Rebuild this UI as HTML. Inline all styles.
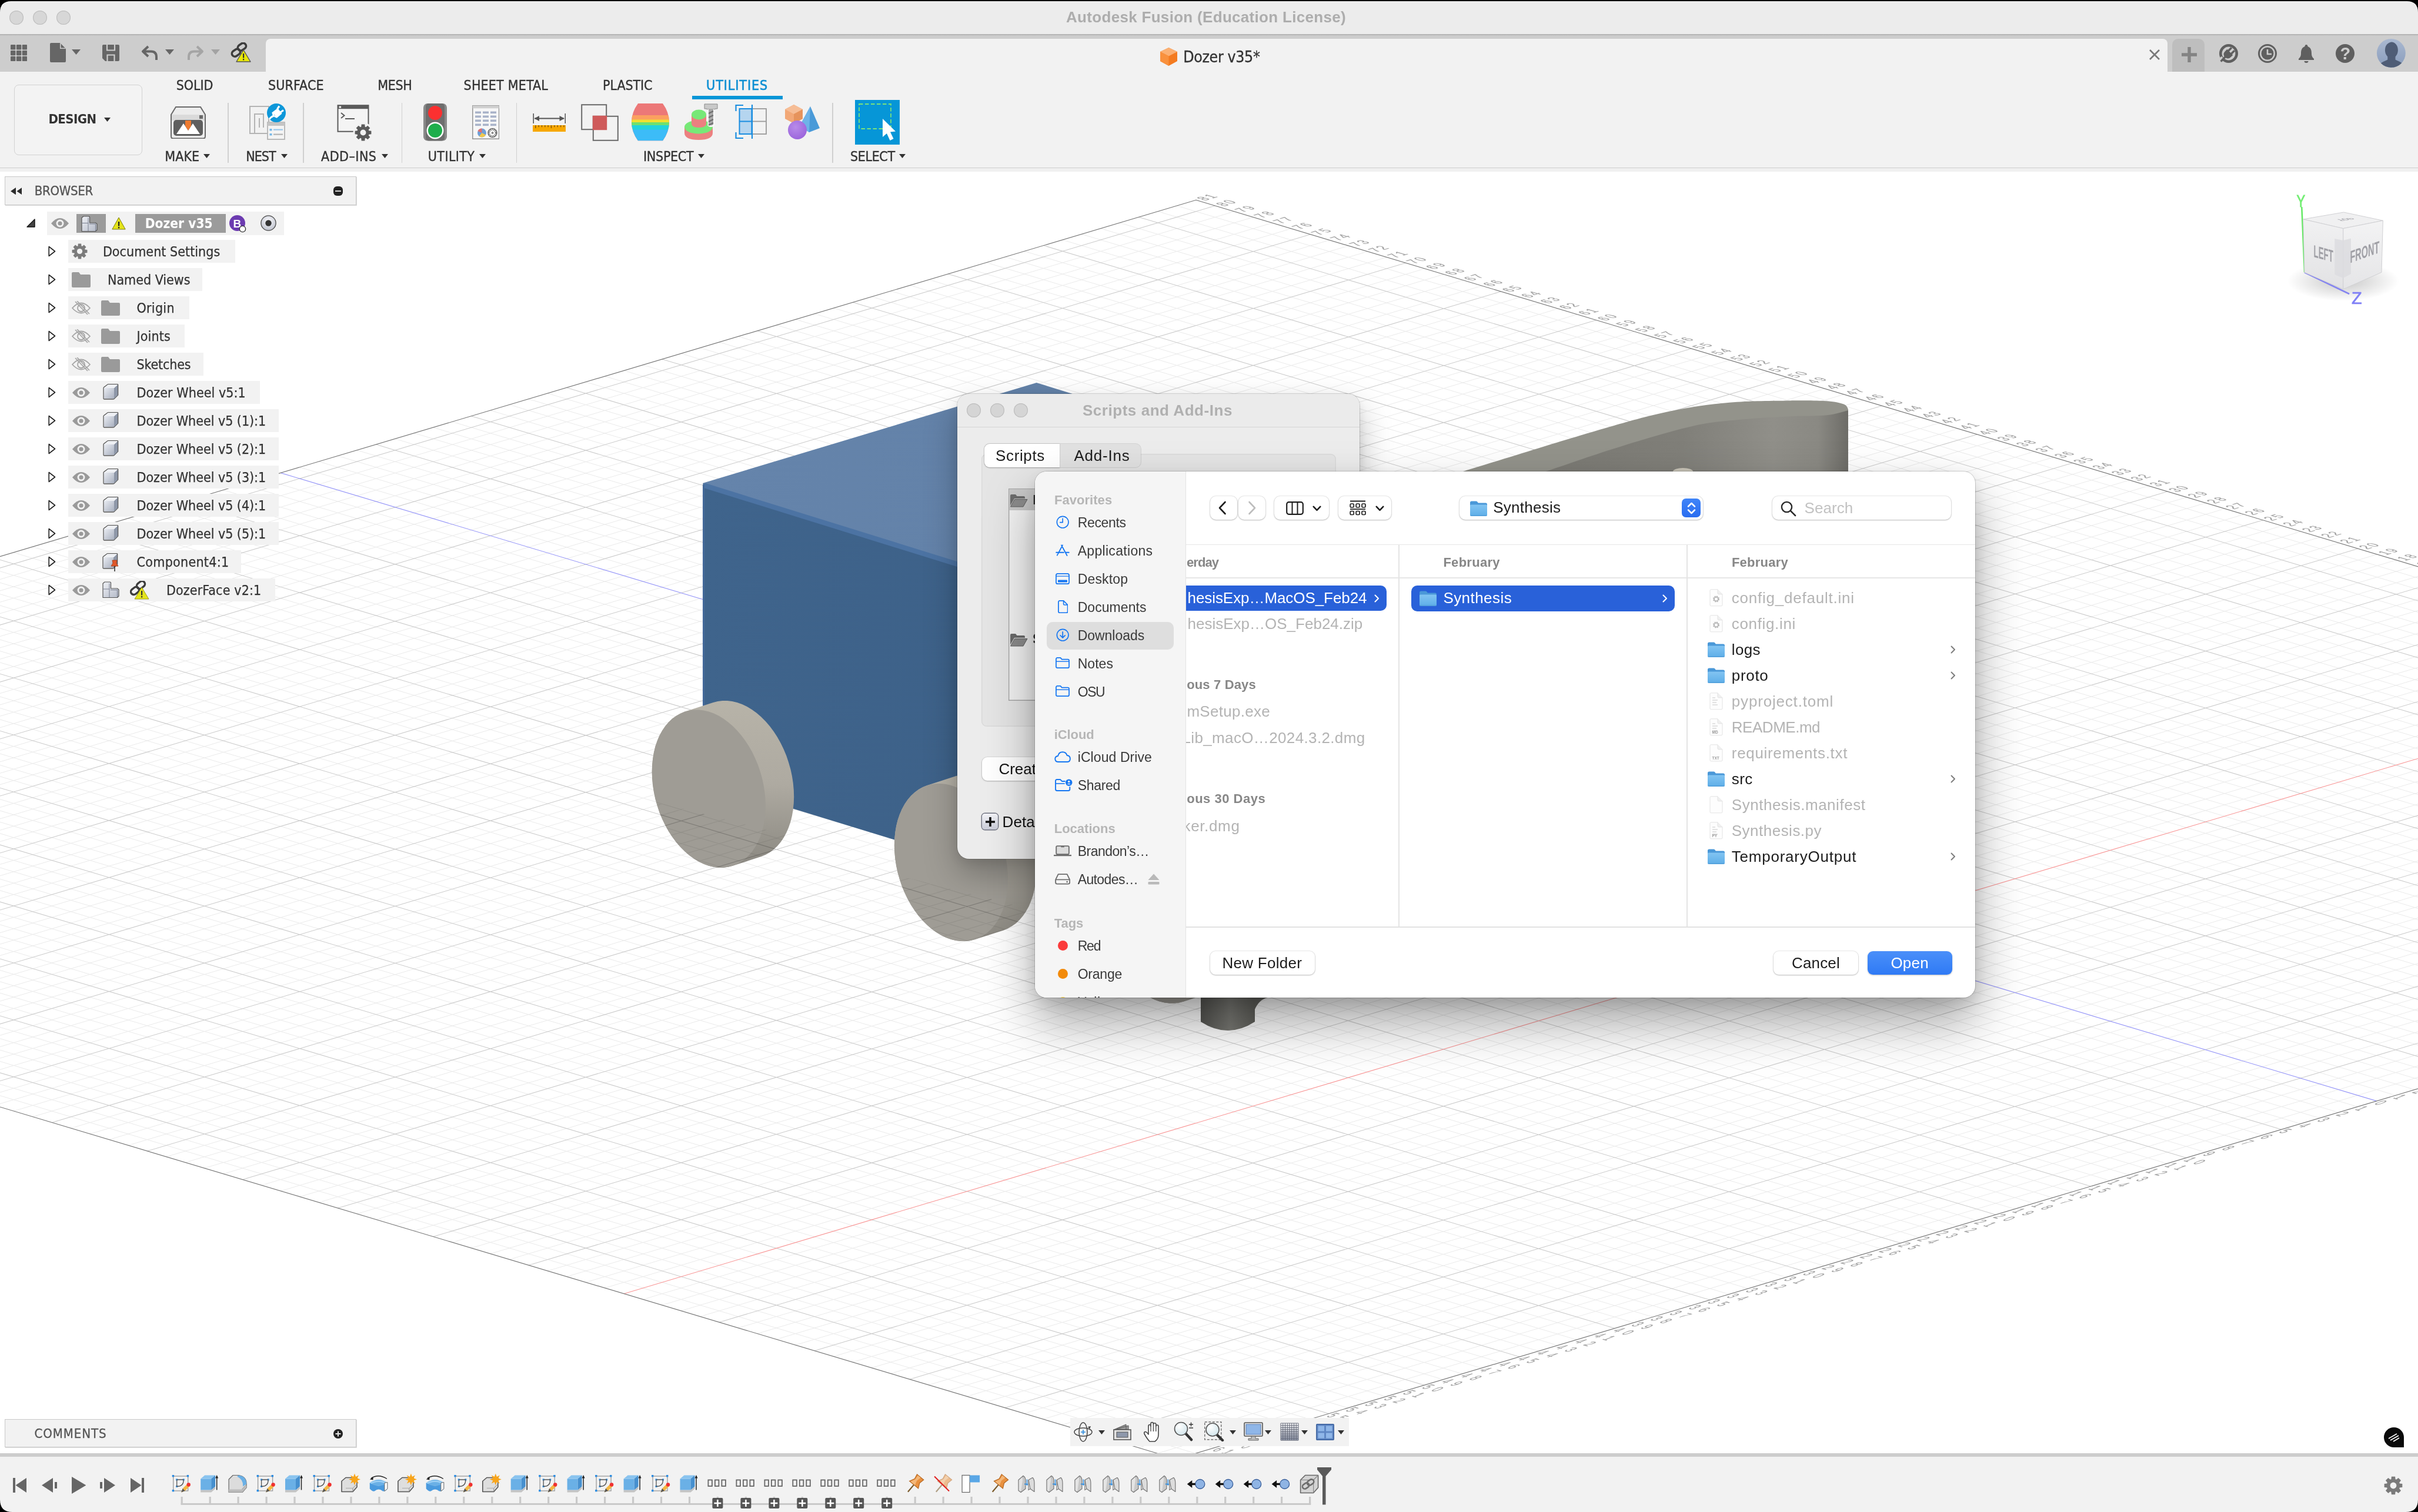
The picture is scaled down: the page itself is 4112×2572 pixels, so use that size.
<!DOCTYPE html>
<html><head><meta charset="utf-8"><title>Autodesk Fusion</title>
<style>
html,body{margin:0;padding:0}
body{width:4112px;height:2572px;overflow:hidden;background:#fff;position:relative;font-kerning:none;-webkit-font-smoothing:antialiased}
.abs{position:absolute;display:block}
.t{position:absolute;white-space:nowrap;font-kerning:none}
</style></head><body><div id="root" style="position:absolute;left:0;top:0;width:4112px;height:2572px;will-change:transform">
<svg class="abs" style="left:0;top:0" width="4112" height="2572" viewBox="0 0 4112 2572">
<defs>
<linearGradient id="gTop" x1="0" y1="0" x2="1" y2="0"><stop offset="0" stop-color="#6584ab"/><stop offset="0.7" stop-color="#6180a6"/><stop offset="1" stop-color="#5a799f"/></linearGradient>
<linearGradient id="gLeft" x1="0" y1="0" x2="1" y2="0"><stop offset="0" stop-color="#3f648c"/><stop offset="1" stop-color="#3c5f86"/></linearGradient>
<linearGradient id="gRim" x1="0" y1="0" x2="0" y2="1"><stop offset="0" stop-color="#b7b3a8"/><stop offset="0.5" stop-color="#aeaaa1"/><stop offset="0.8" stop-color="#98958d"/><stop offset="1" stop-color="#8b8881"/></linearGradient>
<linearGradient id="gFace" gradientUnits="userSpaceOnUse" x1="2630" y1="0" x2="3143" y2="0"><stop offset="0" stop-color="#7b7a74"/><stop offset="0.45" stop-color="#807f79"/><stop offset="0.75" stop-color="#908f89"/><stop offset="0.9" stop-color="#8a8983"/><stop offset="1" stop-color="#6d6c67"/></linearGradient>
<linearGradient id="gCyl" gradientUnits="userSpaceOnUse" x1="2042" y1="0" x2="2134" y2="0"><stop offset="0" stop-color="#565652"/><stop offset="0.55" stop-color="#7a7a75"/><stop offset="1" stop-color="#60605b"/></linearGradient>
<radialGradient id="gShadow"><stop offset="0" stop-color="#000" stop-opacity="0.22"/><stop offset="1" stop-color="#000" stop-opacity="0"/></radialGradient>
</defs>
<defs><path id="gmin" d="M5563.4 1418.7L2001.4 350.0M5531.1 1428.4L1969.0 359.6M5466.3 1447.7L1904.2 379.0M5433.9 1457.4L1871.7 388.6M5401.6 1467.0L1839.3 398.3M5369.2 1476.7L1806.9 408.0M5304.4 1496.0L1742.0 427.3M5272.1 1505.7L1709.6 437.0M5239.7 1515.4L1677.2 446.6M5207.3 1525.0L1644.8 456.3M5142.6 1544.3L1579.9 475.7M5110.2 1554.0L1547.5 485.3M5077.8 1563.7L1515.1 495.0M5045.4 1573.3L1482.6 504.7M4980.7 1592.7L1417.8 524.0M4948.3 1602.3L1385.3 533.7M4915.9 1612.0L1352.9 543.3M4883.5 1621.6L1320.5 553.0M4818.8 1641.0L1255.6 572.3M4786.4 1650.6L1223.2 582.0M4754.0 1660.3L1190.8 591.7M4721.7 1670.0L1158.3 601.4M4656.9 1689.3L1093.5 620.7M4624.5 1699.0L1061.0 630.4M4592.1 1708.6L1028.6 640.0M4559.7 1718.3L996.2 649.7M4495.0 1737.6L931.3 669.1M4462.6 1747.3L898.9 678.7M4430.2 1756.9L866.4 688.4M4397.8 1766.6L834.0 698.1M4333.1 1785.9L769.1 717.4M4300.7 1795.6L736.7 727.1M4268.3 1805.3L704.3 736.7M4235.9 1814.9L671.8 746.4M4171.2 1834.3L607.0 765.8M4138.8 1843.9L574.5 775.4M4106.4 1853.6L542.1 785.1M4074.0 1863.3L509.7 794.8M4009.2 1882.6L444.8 814.1M3976.8 1892.3L412.4 823.8M3944.5 1901.9L379.9 833.5M3912.1 1911.6L347.5 843.1M3847.3 1930.9L282.6 862.5M3814.9 1940.6L250.2 872.2M3782.5 1950.3L217.7 881.8M3750.1 1959.9L185.3 891.5M3685.3 1979.3L120.4 910.8M3653.0 1988.9L88.0 920.5M3620.6 1998.6L55.5 930.2M3588.2 2008.3L23.1 939.9M3523.4 2027.6L-41.8 959.2M3491.0 2037.3L-74.2 968.9M3458.6 2046.9L-106.7 978.6M3426.2 2056.6L-139.1 988.2M3361.4 2075.9L-204.0 1007.6M3329.1 2085.6L-236.5 1017.2M3296.7 2095.3L-268.9 1026.9M3264.3 2104.9L-301.3 1036.6M3199.5 2124.3L-366.2 1055.9M3167.1 2133.9L-398.7 1065.6M3134.7 2143.6L-431.1 1075.3M3102.3 2153.3L-463.6 1085.0M3037.5 2172.6L-528.5 1104.3M3005.1 2182.3L-560.9 1114.0M2972.7 2191.9L-593.3 1123.7M2940.3 2201.6L-625.8 1133.3M2875.5 2221.0L-690.7 1152.7M2843.1 2230.6L-723.1 1162.4M2810.7 2240.3L-755.6 1172.0M2778.3 2250.0L-788.0 1181.7M2713.6 2269.3L-852.9 1201.1M2681.2 2279.0L-885.4 1210.7M2648.8 2288.6L-917.8 1220.4M2616.4 2298.3L-950.3 1230.1M2551.6 2317.6L-1015.2 1249.4M2519.2 2327.3L-1047.6 1259.1M2486.8 2337.0L-1080.1 1268.8M2454.4 2346.7L-1112.5 1278.5M2389.6 2366.0L-1177.4 1297.8M2357.2 2375.7L-1209.9 1307.5M2324.8 2385.3L-1242.3 1317.2M2292.4 2395.0L-1274.8 1326.8M2227.6 2414.3L-1339.7 1346.2M2195.2 2424.0L-1372.1 1355.9M2162.8 2433.7L-1404.6 1365.6M2130.4 2443.4L-1437.0 1375.2M2065.6 2462.7L-1501.9 1394.6M2033.1 2472.4L-1534.4 1404.3M5563.5 1399.4L1968.3 2472.3M5531.1 1389.7L1935.9 2462.6M5498.8 1379.9L1903.6 2452.9M5434.1 1360.5L1838.8 2433.5M5401.7 1350.8L1806.3 2423.8M5369.4 1341.1L1773.9 2414.1M5337.0 1331.4L1741.5 2404.4M5272.3 1312.0L1676.7 2385.0M5240.0 1302.3L1644.3 2375.3M5207.6 1292.6L1611.9 2365.6M5175.3 1282.9L1579.5 2355.9M5110.5 1263.5L1514.7 2336.5M5078.2 1253.8L1482.3 2326.8M5045.8 1244.0L1449.9 2317.1M5013.5 1234.3L1417.5 2307.4M4948.8 1214.9L1352.7 2288.0M4916.4 1205.2L1320.3 2278.3M4884.0 1195.5L1287.8 2268.6M4851.7 1185.8L1255.4 2258.9M4787.0 1166.4L1190.6 2239.5M4754.6 1156.7L1158.2 2229.8M4722.2 1146.9L1125.8 2220.1M4689.9 1137.2L1093.4 2210.4M4625.1 1117.8L1028.5 2191.0M4592.8 1108.1L996.1 2181.3M4560.4 1098.4L963.7 2171.6M4528.0 1088.7L931.3 2161.9M4463.3 1069.3L866.4 2142.4M4430.9 1059.5L834.0 2132.7M4398.6 1049.8L801.6 2123.0M4366.2 1040.1L769.2 2113.3M4301.5 1020.7L704.3 2093.9M4269.1 1011.0L671.9 2084.2M4236.7 1001.3L639.5 2074.5M4204.3 991.6L607.1 2064.8M4139.6 972.1L542.2 2045.4M4107.2 962.4L509.8 2035.7M4074.8 952.7L477.4 2026.0M4042.5 943.0L444.9 2016.2M3977.7 923.6L380.1 1996.8M3945.3 913.8L347.6 1987.1M3913.0 904.1L315.2 1977.4M3880.6 894.4L282.8 1967.7M3815.8 875.0L217.9 1948.3M3783.4 865.3L185.5 1938.6M3751.0 855.5L153.1 1928.9M3718.7 845.8L120.6 1919.2M3653.9 826.4L55.7 1899.7M3621.5 816.7L23.3 1890.0M3589.1 807.0L-9.1 1880.3M3556.7 797.2L-41.6 1870.6M3492.0 777.8L-106.4 1851.2M3459.6 768.1L-138.9 1841.5M3427.2 758.4L-171.3 1831.7M3394.8 748.7L-203.8 1822.0M3330.0 729.2L-268.6 1802.6M3297.6 719.5L-301.1 1792.9M3265.2 709.8L-333.5 1783.2M3232.8 700.1L-366.0 1773.5M3168.1 680.6L-430.9 1754.0M3135.7 670.9L-463.3 1744.3M3103.3 661.2L-495.8 1734.6M3070.9 651.5L-528.2 1724.9M3006.1 632.0L-593.1 1705.5M2973.7 622.3L-625.5 1695.8M2941.3 612.6L-658.0 1686.0M2908.9 602.8L-690.4 1676.3M2844.1 583.4L-755.4 1656.9M2811.7 573.7L-787.8 1647.2M2779.3 564.0L-820.3 1637.5M2746.9 554.2L-852.7 1627.7M2682.1 534.8L-917.6 1608.3M2649.7 525.1L-950.1 1598.6M2617.3 515.3L-982.5 1588.9M2584.9 505.6L-1015.0 1579.2M2520.0 486.2L-1079.9 1559.7M2487.6 476.5L-1112.4 1550.0M2455.2 466.7L-1144.8 1540.3M2422.8 457.0L-1177.3 1530.6M2358.0 437.6L-1242.2 1511.1M2325.6 427.8L-1274.7 1501.4M2293.2 418.1L-1307.1 1491.7M2260.8 408.4L-1339.6 1482.0M2195.9 388.9L-1404.5 1462.5M2163.5 379.2L-1437.0 1452.8M2131.1 369.5L-1469.5 1443.1M2098.7 359.8L-1501.9 1433.4"/><path id="gmaj" d="M5498.7 1438.1L1936.6 369.3M5336.8 1486.4L1774.5 417.6M5174.9 1534.7L1612.3 466.0M5013.1 1583.0L1450.2 514.3M4851.2 1631.3L1288.1 562.7M4689.3 1679.6L1125.9 611.0M4527.4 1728.0L963.7 659.4M4365.5 1776.3L801.6 707.7M4203.5 1824.6L639.4 756.1M3879.7 1921.3L315.0 852.8M3717.7 1969.6L152.8 901.2M3555.8 2017.9L-9.4 949.5M3393.8 2066.3L-171.6 997.9M3231.9 2114.6L-333.8 1046.3M3069.9 2162.9L-496.0 1094.6M2907.9 2211.3L-658.2 1143.0M2746.0 2259.6L-820.5 1191.4M2584.0 2308.0L-982.7 1239.8M2422.0 2356.3L-1145.0 1288.1M2260.0 2404.7L-1307.2 1336.5M2098.0 2453.0L-1469.5 1384.9M5466.4 1370.2L1871.2 2443.2M5304.7 1321.7L1709.1 2394.7M5142.9 1273.2L1547.1 2346.2M4981.1 1224.6L1385.1 2297.7M4819.3 1176.1L1223.0 2249.2M4495.7 1079.0L898.9 2152.2M4333.8 1030.4L736.8 2103.6M4172.0 981.8L574.6 2055.1M4010.1 933.3L412.5 2006.5M3848.2 884.7L250.4 1958.0M3686.3 836.1L88.2 1909.4M3524.4 787.5L-74.0 1860.9M3362.4 738.9L-236.2 1812.3M3200.5 690.3L-398.4 1763.8M3038.5 641.7L-560.6 1715.2M2876.5 593.1L-722.9 1666.6M2714.5 544.5L-885.2 1618.0M2552.5 495.9L-1047.4 1569.4M2390.4 447.3L-1209.7 1520.9M2228.4 398.7L-1372.1 1472.3M2066.3 350.0L-1534.4 1423.7"/></defs>
<use href="#gmin" stroke="#eaeaea" stroke-width="1" fill="none"/>
<use href="#gmaj" stroke="#cbcbcb" stroke-width="1.05" fill="none"/>
<path d="M4041.6 1872.9L477.2 804.4" stroke="#9595f8" stroke-width="1.1"/>
<path d="M4657.5 1127.5L1061.0 2200.7" stroke="#f89595" stroke-width="1.1"/>
<path d="M2033.9 340.3 L5595.8 1409.1 L2000.7 2482.0 L-1566.9 1413.9 Z" stroke="#747474" stroke-width="1.15" fill="none"/>
<g font-family="Liberation Sans,sans-serif" font-size="1" fill="#a2a2a2">
<g letter-spacing="0.14" stroke="#a2a2a2" stroke-width="0.012">
<text transform="matrix(17.8 -5.5 23.4 6.6 2049.3 341.5)">81</text>
<text transform="matrix(17.8 -5.5 23.4 6.6 2081.7 351.2)">80</text>
<text transform="matrix(17.8 -5.5 23.4 6.6 2114.1 361.0)">79</text>
<text transform="matrix(17.8 -5.5 23.4 6.6 2146.5 370.7)">78</text>
<text transform="matrix(17.8 -5.5 23.4 6.6 2178.9 380.4)">77</text>
<text transform="matrix(17.8 -5.5 23.4 6.6 2211.3 390.1)">76</text>
<text transform="matrix(17.8 -5.5 23.4 6.6 2243.8 399.9)">75</text>
<text transform="matrix(17.8 -5.5 23.4 6.6 2276.2 409.6)">74</text>
<text transform="matrix(17.8 -5.5 23.4 6.6 2308.6 419.3)">73</text>
<text transform="matrix(17.8 -5.5 23.4 6.6 2341.0 429.0)">72</text>
<text transform="matrix(17.8 -5.5 23.4 6.6 2373.4 438.8)">71</text>
<text transform="matrix(17.8 -5.5 23.4 6.6 2405.8 448.5)">70</text>
<text transform="matrix(17.8 -5.5 23.4 6.6 2438.2 458.2)">69</text>
<text transform="matrix(17.8 -5.5 23.4 6.6 2470.6 467.9)">68</text>
<text transform="matrix(17.8 -5.5 23.4 6.6 2503.0 477.7)">67</text>
<text transform="matrix(17.8 -5.5 23.4 6.6 2535.4 487.4)">66</text>
<text transform="matrix(17.8 -5.5 23.4 6.6 2567.9 497.1)">65</text>
<text transform="matrix(17.8 -5.5 23.4 6.6 2600.3 506.8)">64</text>
<text transform="matrix(17.8 -5.5 23.4 6.6 2632.7 516.5)">63</text>
<text transform="matrix(17.8 -5.5 23.4 6.6 2665.1 526.3)">62</text>
<text transform="matrix(17.8 -5.5 23.4 6.6 2697.5 536.0)">61</text>
<text transform="matrix(17.8 -5.5 23.4 6.6 2729.9 545.7)">60</text>
<text transform="matrix(17.8 -5.5 23.4 6.6 2762.3 555.4)">59</text>
<text transform="matrix(17.8 -5.5 23.4 6.6 2794.7 565.2)">58</text>
<text transform="matrix(17.8 -5.5 23.4 6.6 2827.1 574.9)">57</text>
<text transform="matrix(17.8 -5.5 23.4 6.6 2859.5 584.6)">56</text>
<text transform="matrix(17.8 -5.5 23.4 6.6 2891.9 594.3)">55</text>
<text transform="matrix(17.8 -5.5 23.4 6.6 2924.3 604.0)">54</text>
<text transform="matrix(17.8 -5.5 23.4 6.6 2956.7 613.8)">53</text>
<text transform="matrix(17.8 -5.5 23.4 6.6 2989.1 623.5)">52</text>
<text transform="matrix(17.8 -5.5 23.4 6.6 3021.5 633.2)">51</text>
<text transform="matrix(17.8 -5.5 23.4 6.6 3053.9 642.9)">50</text>
<text transform="matrix(17.8 -5.5 23.4 6.6 3086.3 652.7)">49</text>
<text transform="matrix(17.8 -5.5 23.4 6.6 3118.7 662.4)">48</text>
<text transform="matrix(17.8 -5.5 23.4 6.6 3151.1 672.1)">47</text>
<text transform="matrix(17.8 -5.5 23.4 6.6 3183.5 681.8)">46</text>
<text transform="matrix(17.8 -5.5 23.4 6.6 3215.9 691.5)">45</text>
<text transform="matrix(17.8 -5.5 23.4 6.6 3248.2 701.3)">44</text>
<text transform="matrix(17.8 -5.5 23.4 6.6 3280.6 711.0)">43</text>
<text transform="matrix(17.8 -5.5 23.4 6.6 3313.0 720.7)">42</text>
<text transform="matrix(17.8 -5.5 23.4 6.6 3345.4 730.4)">41</text>
<text transform="matrix(17.8 -5.5 23.4 6.6 3377.8 740.1)">40</text>
<text transform="matrix(17.8 -5.5 23.4 6.6 3410.2 749.9)">39</text>
<text transform="matrix(17.8 -5.5 23.4 6.6 3442.6 759.6)">38</text>
<text transform="matrix(17.8 -5.5 23.4 6.6 3475.0 769.3)">37</text>
<text transform="matrix(17.8 -5.5 23.4 6.6 3507.4 779.0)">36</text>
<text transform="matrix(17.8 -5.5 23.4 6.6 3539.8 788.7)">35</text>
<text transform="matrix(17.8 -5.5 23.4 6.6 3572.1 798.4)">34</text>
<text transform="matrix(17.8 -5.5 23.4 6.6 3604.5 808.2)">33</text>
<text transform="matrix(17.8 -5.5 23.4 6.6 3636.9 817.9)">32</text>
<text transform="matrix(17.8 -5.5 23.4 6.6 3669.3 827.6)">31</text>
<text transform="matrix(17.8 -5.5 23.4 6.6 3701.7 837.3)">30</text>
<text transform="matrix(17.8 -5.5 23.4 6.6 3734.1 847.0)">29</text>
<text transform="matrix(17.8 -5.5 23.4 6.6 3766.4 856.7)">28</text>
<text transform="matrix(17.8 -5.5 23.4 6.6 3798.8 866.5)">27</text>
<text transform="matrix(17.8 -5.5 23.4 6.6 3831.2 876.2)">26</text>
<text transform="matrix(17.8 -5.5 23.4 6.6 3863.6 885.9)">25</text>
<text transform="matrix(17.8 -5.5 23.4 6.6 3896.0 895.6)">24</text>
<text transform="matrix(17.8 -5.5 23.4 6.6 3928.4 905.3)">23</text>
<text transform="matrix(17.8 -5.5 23.4 6.6 3960.7 915.0)">22</text>
<text transform="matrix(17.8 -5.5 23.4 6.6 3993.1 924.8)">21</text>
<text transform="matrix(17.8 -5.5 23.4 6.6 4025.5 934.5)">20</text>
<text transform="matrix(17.8 -5.5 23.4 6.6 4057.9 944.2)">19</text>
<text transform="matrix(17.8 -5.5 23.4 6.6 4090.2 953.9)">18</text>
<text transform="matrix(17.8 -5.5 23.4 6.6 4122.6 963.6)">17</text>
<text transform="matrix(17.8 -5.5 23.4 6.6 4155.0 973.3)">16</text>
</g><g letter-spacing="0.49" stroke="#a2a2a2" stroke-width="0.012">
<text transform="matrix(15 4.05 -24.4 9.4 4036.0 1877.7)">0</text>
<text transform="matrix(15 4.05 -24.4 9.4 4003.6 1887.4)">1</text>
<text transform="matrix(15 4.05 -24.4 9.4 3971.2 1897.1)">2</text>
<text transform="matrix(15 4.05 -24.4 9.4 3938.9 1906.7)">3</text>
<text transform="matrix(15 4.05 -24.4 9.4 3906.5 1916.4)">4</text>
<text transform="matrix(15 4.05 -24.4 9.4 3874.1 1926.1)">5</text>
<text transform="matrix(15 4.05 -24.4 9.4 3841.7 1935.7)">6</text>
<text transform="matrix(15 4.05 -24.4 9.4 3809.3 1945.4)">7</text>
<text transform="matrix(15 4.05 -24.4 9.4 3776.9 1955.1)">8</text>
<text transform="matrix(15 4.05 -24.4 9.4 3744.5 1964.7)">9</text>
<text transform="matrix(15 4.05 -24.4 9.4 3712.1 1974.4)">10</text>
<text transform="matrix(15 4.05 -24.4 9.4 3679.7 1984.1)">11</text>
<text transform="matrix(15 4.05 -24.4 9.4 3647.4 1993.7)">12</text>
<text transform="matrix(15 4.05 -24.4 9.4 3615.0 2003.4)">13</text>
<text transform="matrix(15 4.05 -24.4 9.4 3582.6 2013.1)">14</text>
<text transform="matrix(15 4.05 -24.4 9.4 3550.2 2022.7)">15</text>
<text transform="matrix(15 4.05 -24.4 9.4 3517.8 2032.4)">16</text>
<text transform="matrix(15 4.05 -24.4 9.4 3485.4 2042.1)">17</text>
<text transform="matrix(15 4.05 -24.4 9.4 3453.0 2051.7)">18</text>
<text transform="matrix(15 4.05 -24.4 9.4 3420.6 2061.4)">19</text>
<text transform="matrix(15 4.05 -24.4 9.4 3388.2 2071.1)">20</text>
<text transform="matrix(15 4.05 -24.4 9.4 3355.8 2080.7)">21</text>
<text transform="matrix(15 4.05 -24.4 9.4 3323.5 2090.4)">22</text>
<text transform="matrix(15 4.05 -24.4 9.4 3291.1 2100.1)">23</text>
<text transform="matrix(15 4.05 -24.4 9.4 3258.7 2109.7)">24</text>
<text transform="matrix(15 4.05 -24.4 9.4 3226.3 2119.4)">25</text>
<text transform="matrix(15 4.05 -24.4 9.4 3193.9 2129.1)">26</text>
<text transform="matrix(15 4.05 -24.4 9.4 3161.5 2138.7)">27</text>
<text transform="matrix(15 4.05 -24.4 9.4 3129.1 2148.4)">28</text>
<text transform="matrix(15 4.05 -24.4 9.4 3096.7 2158.1)">29</text>
<text transform="matrix(15 4.05 -24.4 9.4 3064.3 2167.7)">30</text>
<text transform="matrix(15 4.05 -24.4 9.4 3031.9 2177.4)">31</text>
<text transform="matrix(15 4.05 -24.4 9.4 2999.5 2187.1)">32</text>
<text transform="matrix(15 4.05 -24.4 9.4 2967.1 2196.7)">33</text>
<text transform="matrix(15 4.05 -24.4 9.4 2934.7 2206.4)">34</text>
<text transform="matrix(15 4.05 -24.4 9.4 2902.3 2216.1)">35</text>
<text transform="matrix(15 4.05 -24.4 9.4 2869.9 2225.8)">36</text>
<text transform="matrix(15 4.05 -24.4 9.4 2837.5 2235.4)">37</text>
<text transform="matrix(15 4.05 -24.4 9.4 2805.1 2245.1)">38</text>
<text transform="matrix(15 4.05 -24.4 9.4 2772.7 2254.8)">39</text>
<text transform="matrix(15 4.05 -24.4 9.4 2740.4 2264.4)">40</text>
<text transform="matrix(15 4.05 -24.4 9.4 2708.0 2274.1)">41</text>
<text transform="matrix(15 4.05 -24.4 9.4 2675.6 2283.8)">42</text>
<text transform="matrix(15 4.05 -24.4 9.4 2643.2 2293.4)">43</text>
<text transform="matrix(15 4.05 -24.4 9.4 2610.8 2303.1)">44</text>
<text transform="matrix(15 4.05 -24.4 9.4 2578.4 2312.8)">45</text>
<text transform="matrix(15 4.05 -24.4 9.4 2546.0 2322.4)">46</text>
<text transform="matrix(15 4.05 -24.4 9.4 2513.6 2332.1)">47</text>
<text transform="matrix(15 4.05 -24.4 9.4 2481.2 2341.8)">48</text>
<text transform="matrix(15 4.05 -24.4 9.4 2448.8 2351.5)">49</text>
<text transform="matrix(15 4.05 -24.4 9.4 2416.4 2361.1)">50</text>
<text transform="matrix(15 4.05 -24.4 9.4 2384.0 2370.8)">51</text>
<text transform="matrix(15 4.05 -24.4 9.4 2351.6 2380.5)">52</text>
<text transform="matrix(15 4.05 -24.4 9.4 2319.2 2390.1)">53</text>
<text transform="matrix(15 4.05 -24.4 9.4 2286.8 2399.8)">54</text>
<text transform="matrix(15 4.05 -24.4 9.4 2254.4 2409.5)">55</text>
<text transform="matrix(15 4.05 -24.4 9.4 2222.0 2419.1)">56</text>
<text transform="matrix(15 4.05 -24.4 9.4 2189.6 2428.8)">57</text>
<text transform="matrix(15 4.05 -24.4 9.4 2157.2 2438.5)">58</text>
<text transform="matrix(15 4.05 -24.4 9.4 2124.8 2448.2)">59</text>
<text transform="matrix(15 4.05 -24.4 9.4 2092.4 2457.8)">60</text>
<text transform="matrix(15 4.05 -24.4 9.4 2060.0 2467.5)">61</text>
<text transform="matrix(15 4.05 -24.4 9.4 2027.5 2477.2)">62</text>
<text transform="matrix(15 4.05 -24.4 9.4 1995.1 2486.8)">63</text>
<text transform="matrix(15 4.05 -24.4 9.4 4068.4 1868.1)">1</text>
<text transform="matrix(15 4.05 -24.4 9.4 4100.8 1858.4)">2</text>
<text transform="matrix(15 4.05 -24.4 9.4 4133.2 1848.7)">3</text>
</g></g>
<path d="M2490.2 801.3C2527.4 789.9 2655.7 750.0 2713.6 733.1C2771.5 716.2 2799.7 708.1 2837.6 700.0C2875.5 691.9 2906.5 687.8 2941.0 684.7C2975.5 681.6 3016.8 681.8 3044.4 681.4C3072.0 681.0 3091.3 681.2 3106.5 682.2C3121.7 683.2 3129.3 685.3 3135.4 687.6C3141.5 689.9 3141.7 694.4 3142.9 695.8 L3142.9 1000 L1900 1000 Z" fill="#93938b"/>
<path d="M2630.9 801.3C2651.6 794.4 2713.6 772.6 2754.9 759.9C2796.2 747.1 2844.5 732.5 2879.0 724.8C2913.5 717.1 2934.1 716.4 2961.7 713.6C2989.3 710.8 3020.3 709.4 3044.4 708.2C3068.5 707.0 3090.1 707.9 3106.5 706.2C3122.9 704.5 3136.8 699.3 3142.9 697.9 L3142.9 1000 L2000 1000 Z" fill="url(#gFace)"/>
<ellipse cx="2862" cy="802" rx="17" ry="6" fill="#c9c5b8"/>
<path d="M2042 1600 L2042 1738 Q2088 1768 2134 1738 L2134 1600Z" fill="url(#gCyl)"/>
<path d="M2133 1690L2156 1690L2156 1697Q2141 1700 2133.5 1718Z" fill="#62625d"/>
<path d="M1195.5 821.8L1762.7 650.9L2662.7 930.8L2095.5 1101.7Z" fill="url(#gTop)"/>
<path d="M1195.5 821.8L2095.5 1101.7L2095.5 1604.6L1195.5 1328.6Z" fill="url(#gLeft)"/>
<path d="M1199.5 826.4L2095.5 1105.1" stroke="#4c73a3" stroke-width="8.5" fill="none" stroke-linecap="round"/>
<path d="M1196.5 824.8L1196.5 1328.6" stroke="#44699a" stroke-width="3" fill="none"/>
<path d="M1875.4 1543.5 L1875.8 1532.2 L1876.9 1521.2 L1878.7 1510.6 L1881.2 1500.4 L1884.5 1490.8 L1888.3 1481.9 L1892.9 1473.6 L1898.0 1466.0 L1903.7 1459.3 L1909.9 1453.4 L1916.6 1448.5 L1923.7 1444.5 L1931.2 1441.4 L1979.5 1425.7 L1987.3 1423.7 L1995.3 1422.7 L2003.5 1422.7 L2011.9 1423.7 L2020.3 1425.7 L2028.7 1428.7 L2037.1 1432.7 L2045.3 1437.7 L2053.3 1443.5 L2061.1 1450.2 L2068.6 1457.8 L2075.7 1466.0 L2082.4 1475.0 L2088.6 1484.6 L2094.3 1494.7 L2099.4 1505.3 L2104.0 1516.3 L2107.8 1527.7 L2111.1 1539.2 L2113.6 1550.9 L2115.4 1562.6 L2116.5 1574.2 L2116.9 1585.8 L2116.5 1597.1 L2115.4 1608.1 L2113.6 1618.7 L2111.1 1628.9 L2107.8 1638.5 L2104.0 1647.4 L2099.4 1655.7 L2094.3 1663.3 L2088.6 1670.0 L2082.4 1675.9 L2075.7 1680.8 L2068.6 1684.8 L2061.1 1687.9 L2012.8 1703.6 L2005.0 1705.6 L1997.0 1706.6 L1988.8 1706.6 L1980.4 1705.6 L1972.0 1703.6 L1963.6 1700.6 L1955.2 1696.6 L1947.0 1691.6 L1939.0 1685.8 L1931.2 1679.1 L1923.7 1671.5 L1916.6 1663.3 L1909.9 1654.3 L1903.7 1644.7 L1898.0 1634.6 L1892.9 1624.0 L1888.3 1613.0 L1884.5 1601.6 L1881.2 1590.1 L1878.7 1578.4 L1876.9 1566.7 L1875.8 1555.1 Z" fill="url(#gRim)"/><path d="M2068.6 1601.5 L2068.2 1612.8 L2067.1 1623.8 L2065.3 1634.4 L2062.8 1644.6 L2059.5 1654.2 L2055.7 1663.1 L2051.1 1671.4 L2046.0 1679.0 L2040.3 1685.7 L2034.1 1691.6 L2027.4 1696.5 L2020.3 1700.5 L2012.8 1703.6 L2005.0 1705.6 L1997.0 1706.6 L1988.8 1706.6 L1980.4 1705.6 L1972.0 1703.6 L1963.6 1700.6 L1955.2 1696.6 L1947.0 1691.6 L1939.0 1685.8 L1931.2 1679.1 L1923.7 1671.5 L1916.6 1663.3 L1909.9 1654.3 L1903.7 1644.7 L1898.0 1634.6 L1892.9 1624.0 L1888.3 1613.0 L1884.5 1601.6 L1881.2 1590.1 L1878.7 1578.4 L1876.9 1566.7 L1875.8 1555.1 L1875.4 1543.5 L1875.8 1532.2 L1876.9 1521.2 L1878.7 1510.6 L1881.2 1500.4 L1884.5 1490.8 L1888.3 1481.9 L1892.9 1473.6 L1898.0 1466.0 L1903.7 1459.3 L1909.9 1453.4 L1916.6 1448.5 L1923.7 1444.5 L1931.2 1441.4 L1939.0 1439.4 L1947.0 1438.4 L1955.2 1438.4 L1963.6 1439.4 L1972.0 1441.4 L1980.4 1444.4 L1988.8 1448.4 L1997.0 1453.4 L2005.0 1459.2 L2012.8 1465.9 L2020.3 1473.5 L2027.4 1481.7 L2034.1 1490.7 L2040.3 1500.3 L2046.0 1510.4 L2051.1 1521.0 L2055.7 1532.0 L2059.5 1543.4 L2062.8 1554.9 L2065.3 1566.6 L2067.1 1578.3 L2068.2 1589.9 Z" fill="#9f9c95"/>
<path d="M1108.7 1312.7 L1109.1 1301.4 L1110.2 1290.4 L1112.0 1279.8 L1114.5 1269.6 L1117.8 1260.0 L1121.6 1251.1 L1126.2 1242.8 L1131.3 1235.2 L1137.0 1228.5 L1143.2 1222.6 L1149.9 1217.7 L1157.0 1213.7 L1164.5 1210.6 L1212.8 1194.9 L1220.6 1192.9 L1228.6 1191.9 L1236.8 1191.9 L1245.2 1192.9 L1253.6 1194.9 L1262.0 1197.9 L1270.4 1201.9 L1278.6 1206.9 L1286.6 1212.7 L1294.4 1219.4 L1301.9 1227.0 L1309.0 1235.2 L1315.7 1244.2 L1321.9 1253.8 L1327.6 1263.9 L1332.7 1274.5 L1337.3 1285.5 L1341.1 1296.9 L1344.4 1308.4 L1346.9 1320.1 L1348.7 1331.8 L1349.8 1343.4 L1350.2 1355.0 L1349.8 1366.3 L1348.7 1377.3 L1346.9 1387.9 L1344.4 1398.1 L1341.1 1407.7 L1337.3 1416.6 L1332.7 1424.9 L1327.6 1432.5 L1321.9 1439.2 L1315.7 1445.1 L1309.0 1450.0 L1301.9 1454.0 L1294.4 1457.1 L1246.1 1472.8 L1238.3 1474.8 L1230.3 1475.8 L1222.1 1475.8 L1213.7 1474.8 L1205.3 1472.8 L1196.9 1469.8 L1188.5 1465.8 L1180.3 1460.8 L1172.3 1455.0 L1164.5 1448.3 L1157.0 1440.7 L1149.9 1432.5 L1143.2 1423.5 L1137.0 1413.9 L1131.3 1403.8 L1126.2 1393.2 L1121.6 1382.2 L1117.8 1370.8 L1114.5 1359.3 L1112.0 1347.6 L1110.2 1335.9 L1109.1 1324.3 Z" fill="url(#gRim)"/><path d="M1301.9 1370.7 L1301.5 1382.0 L1300.4 1393.0 L1298.6 1403.6 L1296.1 1413.8 L1292.8 1423.4 L1289.0 1432.3 L1284.4 1440.6 L1279.3 1448.2 L1273.6 1454.9 L1267.4 1460.8 L1260.7 1465.7 L1253.6 1469.7 L1246.1 1472.8 L1238.3 1474.8 L1230.3 1475.8 L1222.1 1475.8 L1213.7 1474.8 L1205.3 1472.8 L1196.9 1469.8 L1188.5 1465.8 L1180.3 1460.8 L1172.3 1455.0 L1164.5 1448.3 L1157.0 1440.7 L1149.9 1432.5 L1143.2 1423.5 L1137.0 1413.9 L1131.3 1403.8 L1126.2 1393.2 L1121.6 1382.2 L1117.8 1370.8 L1114.5 1359.3 L1112.0 1347.6 L1110.2 1335.9 L1109.1 1324.3 L1108.7 1312.7 L1109.1 1301.4 L1110.2 1290.4 L1112.0 1279.8 L1114.5 1269.6 L1117.8 1260.0 L1121.6 1251.1 L1126.2 1242.8 L1131.3 1235.2 L1137.0 1228.5 L1143.2 1222.6 L1149.9 1217.7 L1157.0 1213.7 L1164.5 1210.6 L1172.3 1208.6 L1180.3 1207.6 L1188.5 1207.6 L1196.9 1208.6 L1205.3 1210.6 L1213.7 1213.6 L1222.1 1217.6 L1230.3 1222.6 L1238.3 1228.4 L1246.1 1235.1 L1253.6 1242.7 L1260.7 1250.9 L1267.4 1259.9 L1273.6 1269.5 L1279.3 1279.6 L1284.4 1290.2 L1289.0 1301.2 L1292.8 1312.6 L1296.1 1324.1 L1298.6 1335.8 L1300.4 1347.5 L1301.5 1359.1 Z" fill="#9f9c95"/>
<path d="M1520.9 1438.0 L1521.3 1426.7 L1522.4 1415.7 L1524.2 1405.1 L1526.7 1394.9 L1530.0 1385.3 L1533.8 1376.4 L1538.4 1368.1 L1543.5 1360.5 L1549.2 1353.8 L1555.4 1347.9 L1562.1 1343.0 L1569.2 1339.0 L1576.7 1335.9 L1625.0 1320.2 L1632.8 1318.2 L1640.8 1317.2 L1649.0 1317.2 L1657.4 1318.2 L1665.8 1320.2 L1674.2 1323.2 L1682.6 1327.2 L1690.8 1332.2 L1698.8 1338.0 L1706.6 1344.7 L1714.1 1352.3 L1721.2 1360.5 L1727.9 1369.5 L1734.1 1379.1 L1739.8 1389.2 L1744.9 1399.8 L1749.5 1410.8 L1753.3 1422.2 L1756.6 1433.7 L1759.1 1445.4 L1760.9 1457.1 L1762.0 1468.7 L1762.4 1480.3 L1762.0 1491.6 L1760.9 1502.6 L1759.1 1513.2 L1756.6 1523.4 L1753.3 1533.0 L1749.5 1541.9 L1744.9 1550.2 L1739.8 1557.8 L1734.1 1564.5 L1727.9 1570.4 L1721.2 1575.3 L1714.1 1579.3 L1706.6 1582.4 L1658.3 1598.1 L1650.5 1600.1 L1642.5 1601.1 L1634.3 1601.1 L1625.9 1600.1 L1617.5 1598.1 L1609.1 1595.1 L1600.7 1591.1 L1592.5 1586.1 L1584.5 1580.3 L1576.7 1573.6 L1569.2 1566.0 L1562.1 1557.8 L1555.4 1548.8 L1549.2 1539.2 L1543.5 1529.1 L1538.4 1518.5 L1533.8 1507.5 L1530.0 1496.1 L1526.7 1484.6 L1524.2 1472.9 L1522.4 1461.2 L1521.3 1449.6 Z" fill="url(#gRim)"/><path d="M1714.1 1496.0 L1713.7 1507.3 L1712.6 1518.3 L1710.8 1528.9 L1708.3 1539.1 L1705.0 1548.7 L1701.2 1557.6 L1696.6 1565.9 L1691.5 1573.5 L1685.8 1580.2 L1679.6 1586.1 L1672.9 1591.0 L1665.8 1595.0 L1658.3 1598.1 L1650.5 1600.1 L1642.5 1601.1 L1634.3 1601.1 L1625.9 1600.1 L1617.5 1598.1 L1609.1 1595.1 L1600.7 1591.1 L1592.5 1586.1 L1584.5 1580.3 L1576.7 1573.6 L1569.2 1566.0 L1562.1 1557.8 L1555.4 1548.8 L1549.2 1539.2 L1543.5 1529.1 L1538.4 1518.5 L1533.8 1507.5 L1530.0 1496.1 L1526.7 1484.6 L1524.2 1472.9 L1522.4 1461.2 L1521.3 1449.6 L1520.9 1438.0 L1521.3 1426.7 L1522.4 1415.7 L1524.2 1405.1 L1526.7 1394.9 L1530.0 1385.3 L1533.8 1376.4 L1538.4 1368.1 L1543.5 1360.5 L1549.2 1353.8 L1555.4 1347.9 L1562.1 1343.0 L1569.2 1339.0 L1576.7 1335.9 L1584.5 1333.9 L1592.5 1332.9 L1600.7 1332.9 L1609.1 1333.9 L1617.5 1335.9 L1625.9 1338.9 L1634.3 1342.9 L1642.5 1347.9 L1650.5 1353.7 L1658.3 1360.4 L1665.8 1368.0 L1672.9 1376.2 L1679.6 1385.2 L1685.8 1394.8 L1691.5 1404.9 L1696.6 1415.5 L1701.2 1426.5 L1705.0 1437.9 L1708.3 1449.4 L1710.8 1461.1 L1712.6 1472.8 L1713.7 1484.4 Z" fill="#9f9c95"/>
<clipPath id="wc0"><path d="M1108.7 1312.7 L1109.1 1301.4 L1110.2 1290.4 L1112.0 1279.8 L1114.5 1269.6 L1117.8 1260.0 L1121.6 1251.1 L1126.2 1242.8 L1131.3 1235.2 L1137.0 1228.5 L1143.2 1222.6 L1149.9 1217.7 L1157.0 1213.7 L1164.5 1210.6 L1212.8 1194.9 L1220.6 1192.9 L1228.6 1191.9 L1236.8 1191.9 L1245.2 1192.9 L1253.6 1194.9 L1262.0 1197.9 L1270.4 1201.9 L1278.6 1206.9 L1286.6 1212.7 L1294.4 1219.4 L1301.9 1227.0 L1309.0 1235.2 L1315.7 1244.2 L1321.9 1253.8 L1327.6 1263.9 L1332.7 1274.5 L1337.3 1285.5 L1341.1 1296.9 L1344.4 1308.4 L1346.9 1320.1 L1348.7 1331.8 L1349.8 1343.4 L1350.2 1355.0 L1349.8 1366.3 L1348.7 1377.3 L1346.9 1387.9 L1344.4 1398.1 L1341.1 1407.7 L1337.3 1416.6 L1332.7 1424.9 L1327.6 1432.5 L1321.9 1439.2 L1315.7 1445.1 L1309.0 1450.0 L1301.9 1454.0 L1294.4 1457.1 L1246.1 1472.8 L1238.3 1474.8 L1230.3 1475.8 L1222.1 1475.8 L1213.7 1474.8 L1205.3 1472.8 L1196.9 1469.8 L1188.5 1465.8 L1180.3 1460.8 L1172.3 1455.0 L1164.5 1448.3 L1157.0 1440.7 L1149.9 1432.5 L1143.2 1423.5 L1137.0 1413.9 L1131.3 1403.8 L1126.2 1393.2 L1121.6 1382.2 L1117.8 1370.8 L1114.5 1359.3 L1112.0 1347.6 L1110.2 1335.9 L1109.1 1324.3 Z"/></clipPath>
<clipPath id="wh0"><path d="M1013.7 1338.0L1513.7 1465.5L1513.7 1763.5L1013.7 1763.5Z"/></clipPath>
<g clip-path="url(#wc0)"><g clip-path="url(#wh0)"><use href="#gmin" stroke="#000" stroke-opacity="0.07" stroke-width="1.2" fill="none"/><use href="#gmaj" stroke="#000" stroke-opacity="0.2" stroke-width="1.2" fill="none"/></g></g>
<clipPath id="wc1"><path d="M1520.9 1438.0 L1521.3 1426.7 L1522.4 1415.7 L1524.2 1405.1 L1526.7 1394.9 L1530.0 1385.3 L1533.8 1376.4 L1538.4 1368.1 L1543.5 1360.5 L1549.2 1353.8 L1555.4 1347.9 L1562.1 1343.0 L1569.2 1339.0 L1576.7 1335.9 L1625.0 1320.2 L1632.8 1318.2 L1640.8 1317.2 L1649.0 1317.2 L1657.4 1318.2 L1665.8 1320.2 L1674.2 1323.2 L1682.6 1327.2 L1690.8 1332.2 L1698.8 1338.0 L1706.6 1344.7 L1714.1 1352.3 L1721.2 1360.5 L1727.9 1369.5 L1734.1 1379.1 L1739.8 1389.2 L1744.9 1399.8 L1749.5 1410.8 L1753.3 1422.2 L1756.6 1433.7 L1759.1 1445.4 L1760.9 1457.1 L1762.0 1468.7 L1762.4 1480.3 L1762.0 1491.6 L1760.9 1502.6 L1759.1 1513.2 L1756.6 1523.4 L1753.3 1533.0 L1749.5 1541.9 L1744.9 1550.2 L1739.8 1557.8 L1734.1 1564.5 L1727.9 1570.4 L1721.2 1575.3 L1714.1 1579.3 L1706.6 1582.4 L1658.3 1598.1 L1650.5 1600.1 L1642.5 1601.1 L1634.3 1601.1 L1625.9 1600.1 L1617.5 1598.1 L1609.1 1595.1 L1600.7 1591.1 L1592.5 1586.1 L1584.5 1580.3 L1576.7 1573.6 L1569.2 1566.0 L1562.1 1557.8 L1555.4 1548.8 L1549.2 1539.2 L1543.5 1529.1 L1538.4 1518.5 L1533.8 1507.5 L1530.0 1496.1 L1526.7 1484.6 L1524.2 1472.9 L1522.4 1461.2 L1521.3 1449.6 Z"/></clipPath>
<clipPath id="wh1"><path d="M1425.9 1463.3L1925.9 1590.8L1925.9 1888.8L1425.9 1888.8Z"/></clipPath>
<g clip-path="url(#wc1)"><g clip-path="url(#wh1)"><use href="#gmin" stroke="#000" stroke-opacity="0.07" stroke-width="1.2" fill="none"/><use href="#gmaj" stroke="#000" stroke-opacity="0.2" stroke-width="1.2" fill="none"/></g></g>
<ellipse cx="3985" cy="478" rx="95" ry="34" fill="url(#gShadow)"/>
<path d="M3914.3 352L3919 463.3" stroke="#62e862" stroke-width="2.5"/>
<path d="M3919 463.3L3995.2 500" stroke="#8484f0" stroke-width="2.5"/>
<defs><linearGradient id="vcL" x1="0" y1="0" x2="0" y2="1"><stop offset="0" stop-color="#f1f1f2"/><stop offset="1" stop-color="#e2e2e4"/></linearGradient><linearGradient id="vcF" x1="0" y1="0" x2="0" y2="1"><stop offset="0" stop-color="#f3f3f4"/><stop offset="1" stop-color="#e5e5e7"/></linearGradient></defs>
<path d="M3916.7 372.9L3985.7 361L4052.4 375.2L3984.8 388.6Z" fill="#f0f0f1" stroke="#d0d0d3" stroke-width="1"/>
<path d="M3916.7 372.9L3984.8 388.6L3984.8 491.9L3919 463.3Z" fill="url(#vcL)" stroke="#d0d0d3" stroke-width="1"/>
<path d="M3984.8 388.6L4052.4 375.2L4050 463.3L3984.8 491.9Z" fill="url(#vcF)" stroke="#d0d0d3" stroke-width="1"/>
<path d="M3970.3 406L3984.8 409L3998 405.5L3998 466L3984.8 473L3970.3 467Z" fill="#dcdcdf" opacity="0.85"/>
<g font-family="Liberation Sans,sans-serif" font-weight="700" fill="#a0a0a6">
<text transform="matrix(0.46 0.127 0 1 3934.5 437)" font-size="29">LEFT</text>
<text transform="matrix(0.5 -0.178 0 1 3996.5 447.5)" font-size="29">FRONT</text>
<text transform="matrix(0.85 -0.12 -0.9 -0.25 3972 373.5)" font-size="14" fill="#a6a6ac">TOP</text>
</g>
<text transform="matrix(0.76 0 0 1 3905.5 352)" font-family="Liberation Sans,sans-serif" font-size="29" fill="#74ee74" stroke="#74ee74" stroke-width="0.9">Y</text>
<text x="3999" y="517" font-family="Liberation Sans,sans-serif" font-size="29" fill="#8080f6" stroke="#8080f6" stroke-width="0.7">Z</text>
</svg>
<div class="abs" style="left:0.0px;top:0.0px;width:4112.0px;height:60.0px;background:#ececec"></div>
<div class="abs" style="left:0.0px;top:57.8px;width:4112.0px;height:3.4px;background:linear-gradient(#a8a8a8,#b9b9b9 40%,#cdcdcd)"></div>
<div class="abs" style="left:16.0px;top:17.7px;width:24.0px;height:24.0px;border-radius:50%;background:#d7d7d7;box-shadow:inset 0 0 0 1.2px #bfbfbf"></div>
<div class="abs" style="left:55.8px;top:17.7px;width:24.0px;height:24.0px;border-radius:50%;background:#d7d7d7;box-shadow:inset 0 0 0 1.2px #bfbfbf"></div>
<div class="abs" style="left:96.0px;top:17.7px;width:24.0px;height:24.0px;border-radius:50%;background:#d7d7d7;box-shadow:inset 0 0 0 1.2px #bfbfbf"></div>
<div class="t" style="left:1813.0px;top:12.0px;font:700 26.00px/34px 'Liberation Sans',sans-serif;color:#adadad;letter-spacing:0.310px;">Autodesk Fusion (Education License)</div>
<div class="abs" style="left:0.0px;top:61.0px;width:4112.0px;height:61.0px;background:#cdcdcd"></div>
<div class="abs" style="left:452.0px;top:66.0px;width:3233.7px;height:60.0px;background:#f2f2f2;border-radius:8px 8px 0 0"></div>
<div class="abs" style="left:0.0px;top:121.7px;width:4112.0px;height:164.0px;background:#f2f2f2"></div>
<div class="abs" style="left:0.0px;top:285.2px;width:4112.0px;height:1.2px;background:#cfcfcf"></div>
<div class="abs" style="left:0.0px;top:286.4px;width:4112.0px;height:5.6px;background:#f0f0f0"></div>
<svg class="abs" style="left:1973.4px;top:81.0px;" width="29.0" height="31.0" viewBox="0 0 29 31" preserveAspectRatio="none"><path d="M14.5 0L29 7V23L14.5 31L0 23V7Z" fill="#f47b20"/><path d="M14.5 0L29 7L14.5 14.5L0 7Z" fill="#fbb073"/><path d="M0 7L14.5 14.5V31L0 23Z" fill="#f9913d"/></svg>
<div class="t" style="left:2012.2px;top:80.0px;font:400 26.50px/34px 'DejaVu Sans Condensed','DejaVu Sans',sans-serif;color:#333;letter-spacing:-0.355px;-webkit-text-stroke:0.3px #333;">Dozer v35*</div>
<svg class="abs" style="left:3653.5px;top:83.4px;" width="20.0" height="20.0" viewBox="0 0 20 20" preserveAspectRatio="none"><path d="M2 2L18 18M18 2L2 18" stroke="#787878" stroke-width="2.7" fill="none"/></svg>
<div class="abs" style="left:3693.9px;top:66.0px;width:55.4px;height:55.7px;background:#bebebe;border-radius:10px 10px 0 0"></div>
<svg class="abs" style="left:3709.5px;top:80.4px;" width="26.0" height="26.0" viewBox="0 0 26 26" preserveAspectRatio="none"><path d="M13 0V26M0 13H26" stroke="#838383" stroke-width="5.4" fill="none"/></svg>
<svg class="abs" style="left:3773.6px;top:74.5px;" width="32.0" height="32.0" viewBox="0 0 32 32" preserveAspectRatio="none"><circle cx="16" cy="16" r="13.7" fill="#cdcdcd" stroke="#5f5f5f" stroke-width="4.6"/><g transform="rotate(45 16 16) translate(16 16) scale(1.2) translate(-16 -15.2)" fill="#5f5f5f"><path d="M10.2 12.5H21.8V16.5Q21.8 22.5 16 22.5Q10.2 22.5 10.2 16.5Z"/><rect x="11.6" y="6.5" width="2.9" height="7"/><rect x="17.5" y="6.5" width="2.9" height="7"/><rect x="14.5" y="22" width="3" height="9"/><rect x="11.6" y="25.2" width="2.9" height="8" fill="#cdcdcd"/></g></svg>
<svg class="abs" style="left:3839.6px;top:74.5px;" width="32.0" height="32.0" viewBox="0 0 32 32" preserveAspectRatio="none"><circle cx="16" cy="16" r="14.5" fill="none" stroke="#5f5f5f" stroke-width="3"/><circle cx="16" cy="16" r="10.5" fill="#5f5f5f"/><path d="M16 9V17H23" stroke="#cdcdcd" stroke-width="2.6" fill="none"/></svg>
<svg class="abs" style="left:3905.6px;top:74.5px;" width="32.0" height="32.0" viewBox="0 0 32 32" preserveAspectRatio="none"><path d="M16 1C18 1 18.5 3 18.5 4C24 6 25 11 25 16C25 21 27 23 29 25V27H3V25C5 23 7 21 7 16C7 11 8 6 13.5 4C13.5 3 14 1 16 1Z" fill="#5f5f5f"/><path d="M12.5 29H19.5C19.5 31 18 32 16 32C14 32 12.5 31 12.5 29Z" fill="#5f5f5f"/></svg>
<svg class="abs" style="left:3971.6px;top:74.5px;" width="32.0" height="32.0" viewBox="0 0 32 32" preserveAspectRatio="none"><circle cx="16" cy="16" r="16" fill="#5f5f5f"/></svg>
<div class="t" style="left:3979.6px;top:71.8px;font:700 29.00px/38px 'Liberation Sans',sans-serif;color:#cdcdcd;">?</div>
<svg class="abs" style="left:4042.3px;top:66.0px;" width="48.8" height="48.8" viewBox="0 0 48 48" preserveAspectRatio="none"><defs><linearGradient id="av" x1="0" y1="0" x2="0" y2="1"><stop offset="0" stop-color="#aab9d1"/><stop offset="1" stop-color="#899cbb"/></linearGradient><clipPath id="avc"><circle cx="24" cy="24" r="24"/></clipPath></defs><circle cx="24" cy="24" r="24" fill="url(#av)"/><g clip-path="url(#avc)" fill="#4f5d76"><ellipse cx="24.5" cy="19" rx="10.8" ry="13.5"/><path d="M18 28H31V35C36 38 45 39 47 50H2C4 39 13 38 18 35Z"/></g></svg>
<svg class="abs" style="left:17.8px;top:75.8px;" width="28.2" height="28.2" viewBox="0 0 28.2 28.2" preserveAspectRatio="none"><g fill="#666"><rect x="0" y="0" width="8.4" height="8.4" rx="1.2"/><rect x="0" y="9.9" width="8.4" height="8.4" rx="1.2"/><rect x="0" y="19.8" width="8.4" height="8.4" rx="1.2"/><rect x="9.9" y="0" width="8.4" height="8.4" rx="1.2"/><rect x="9.9" y="9.9" width="8.4" height="8.4" rx="1.2"/><rect x="9.9" y="19.8" width="8.4" height="8.4" rx="1.2"/><rect x="19.8" y="0" width="8.4" height="8.4" rx="1.2"/><rect x="19.8" y="9.9" width="8.4" height="8.4" rx="1.2"/><rect x="19.8" y="19.8" width="8.4" height="8.4" rx="1.2"/></g></svg>
<svg class="abs" style="left:84.5px;top:73.0px;" width="27.0" height="33.0" viewBox="0 0 27 33" preserveAspectRatio="none"><path d="M2 0H17L27 10V31Q27 33 25 33H2Q0 33 0 31V2Q0 0 2 0Z" fill="#666"/><path d="M17 0V10H27Z" fill="#cdcdcd"/><path d="M18.5 1.5L25.5 8.5H18.5Z" fill="#666"/></svg>
<svg class="abs" style="left:122.0px;top:84.0px;" width="15.0" height="9.0" viewBox="0 0 15 9" preserveAspectRatio="none"><path d="M0 0H15 L7.5 9Z" fill="#666"/></svg>
<svg class="abs" style="left:173.5px;top:76.0px;" width="29.0" height="28.0" viewBox="0 0 29 28" preserveAspectRatio="none"><path d="M0 2Q0 0 2 0H27Q29 0 29 2V26Q29 28 27 28H5L0 23Z" fill="#666"/><path d="M8 0V9.5H21V0M8.5 28V17.5H20.5V28" fill="none" stroke="#cdcdcd" stroke-width="2.2"/></svg>
<svg class="abs" style="left:240.0px;top:77.0px;" width="30.0" height="26.0" viewBox="0 0 30 26" preserveAspectRatio="none"><path d="M12 2L3 10.5L12 19M3 10.5H17Q26 10.5 26 20V25" stroke="#666" stroke-width="4" fill="none" stroke-linejoin="round"/></svg>
<svg class="abs" style="left:281.0px;top:83.5px;" width="15.0" height="9.0" viewBox="0 0 15 9" preserveAspectRatio="none"><path d="M0 0H15 L7.5 9Z" fill="#666"/></svg>
<svg class="abs" style="left:317.0px;top:77.0px;" width="30.0" height="26.0" viewBox="0 0 30 26" preserveAspectRatio="none"><path d="M18 2L27 10.5L18 19M27 10.5H13Q4 10.5 4 20V25" stroke="#a5a5a5" stroke-width="4" fill="none" stroke-linejoin="round"/></svg>
<svg class="abs" style="left:359.0px;top:83.5px;" width="15.0" height="9.0" viewBox="0 0 15 9" preserveAspectRatio="none"><path d="M0 0H15 L7.5 9Z" fill="#a3a3a3"/></svg>
<svg class="abs" style="left:392.0px;top:72.0px;" width="36.0" height="34.0" viewBox="0 0 36 34" preserveAspectRatio="none"><g fill="none" stroke="#3c3c3c" stroke-width="3.6"><rect x="12" y="3" width="15" height="10" rx="5" transform="rotate(-35 19 8)"/><rect x="2" y="13" width="15" height="10" rx="5" transform="rotate(-35 9 18)"/></g><path d="M22 13L34 33H10Z" fill="#e8e808" stroke="#555" stroke-width="1.4" stroke-linejoin="round"/><rect x="21" y="19" width="2.2" height="7.5" fill="#333"/><rect x="21" y="28" width="2.2" height="2.4" fill="#333"/></svg>
<div class="abs" style="left:23.9px;top:144.0px;width:218.3px;height:120.3px;border:1.6px solid #d2d2d2;border-radius:8px;box-sizing:border-box;background:#f3f3f3"></div>
<div class="t" style="left:82.4px;top:188.1px;font:700 22.00px/29px 'DejaVu Sans Condensed','DejaVu Sans',sans-serif;color:#333;letter-spacing:-0.563px;">DESIGN</div>
<svg class="abs" style="left:177.0px;top:199.5px;" width="11.0" height="7.0" viewBox="0 0 11 7" preserveAspectRatio="none"><path d="M0 0H11 L5.5 7Z" fill="#333"/></svg>
<div class="t" style="left:299.8px;top:130.2px;font:400 23.00px/30px 'DejaVu Sans Condensed','DejaVu Sans',sans-serif;color:#333;letter-spacing:-0.076px;-webkit-text-stroke:0.35px #333;">SOLID</div>
<div class="t" style="left:456.0px;top:130.2px;font:400 23.00px/30px 'DejaVu Sans Condensed','DejaVu Sans',sans-serif;color:#333;letter-spacing:0.139px;-webkit-text-stroke:0.35px #333;">SURFACE</div>
<div class="t" style="left:642.3px;top:130.2px;font:400 23.00px/30px 'DejaVu Sans Condensed','DejaVu Sans',sans-serif;color:#333;letter-spacing:-0.409px;-webkit-text-stroke:0.35px #333;">MESH</div>
<div class="t" style="left:788.6px;top:130.2px;font:400 23.00px/30px 'DejaVu Sans Condensed','DejaVu Sans',sans-serif;color:#333;letter-spacing:0.163px;-webkit-text-stroke:0.35px #333;">SHEET METAL</div>
<div class="t" style="left:1025.1px;top:130.2px;font:400 23.00px/30px 'DejaVu Sans Condensed','DejaVu Sans',sans-serif;color:#333;letter-spacing:-0.101px;-webkit-text-stroke:0.35px #333;">PLASTIC</div>
<div class="t" style="left:1201.1px;top:130.2px;font:400 23.00px/30px 'DejaVu Sans Condensed','DejaVu Sans',sans-serif;color:#0d8fd3;letter-spacing:0.950px;-webkit-text-stroke:0.6px #0d8fd3;">UTILITIES</div>
<div class="abs" style="left:1177.1px;top:163.0px;width:154.0px;height:5.8px;background:#0696d7"></div>
<div class="abs" style="left:387.2px;top:175.0px;width:1.8px;height:101.5px;background:#d0d0d0"></div>
<div class="abs" style="left:515.2px;top:175.0px;width:1.8px;height:101.5px;background:#d0d0d0"></div>
<div class="abs" style="left:682.7px;top:175.0px;width:1.8px;height:101.5px;background:#d0d0d0"></div>
<div class="abs" style="left:877.5px;top:175.0px;width:1.8px;height:101.5px;background:#d0d0d0"></div>
<div class="abs" style="left:1415.0px;top:175.0px;width:1.8px;height:101.5px;background:#d0d0d0"></div>
<div class="t" style="left:280.3px;top:250.8px;font:400 23.00px/30px 'DejaVu Sans Condensed','DejaVu Sans',sans-serif;color:#333;letter-spacing:0.039px;-webkit-text-stroke:0.35px #333;">MAKE</div>
<svg class="abs" style="left:346.0px;top:261.8px;" width="11.0" height="7.0" viewBox="0 0 11 7" preserveAspectRatio="none"><path d="M0 0H11 L5.5 7Z" fill="#333"/></svg>
<div class="t" style="left:418.2px;top:250.8px;font:400 23.00px/30px 'DejaVu Sans Condensed','DejaVu Sans',sans-serif;color:#333;letter-spacing:-0.956px;-webkit-text-stroke:0.35px #333;">NEST</div>
<svg class="abs" style="left:478.0px;top:261.8px;" width="11.0" height="7.0" viewBox="0 0 11 7" preserveAspectRatio="none"><path d="M0 0H11 L5.5 7Z" fill="#333"/></svg>
<div class="t" style="left:546.0px;top:250.8px;font:400 23.00px/30px 'DejaVu Sans Condensed','DejaVu Sans',sans-serif;color:#333;letter-spacing:0.489px;-webkit-text-stroke:0.35px #333;">ADD–INS</div>
<svg class="abs" style="left:648.5px;top:261.8px;" width="11.0" height="7.0" viewBox="0 0 11 7" preserveAspectRatio="none"><path d="M0 0H11 L5.5 7Z" fill="#333"/></svg>
<div class="t" style="left:727.8px;top:250.8px;font:400 23.00px/30px 'DejaVu Sans Condensed','DejaVu Sans',sans-serif;color:#333;letter-spacing:0.404px;-webkit-text-stroke:0.35px #333;">UTILITY</div>
<svg class="abs" style="left:814.6px;top:261.8px;" width="11.0" height="7.0" viewBox="0 0 11 7" preserveAspectRatio="none"><path d="M0 0H11 L5.5 7Z" fill="#333"/></svg>
<div class="t" style="left:1094.0px;top:250.8px;font:400 23.00px/30px 'DejaVu Sans Condensed','DejaVu Sans',sans-serif;color:#333;letter-spacing:-0.279px;-webkit-text-stroke:0.35px #333;">INSPECT</div>
<svg class="abs" style="left:1186.6px;top:261.8px;" width="11.0" height="7.0" viewBox="0 0 11 7" preserveAspectRatio="none"><path d="M0 0H11 L5.5 7Z" fill="#333"/></svg>
<div class="t" style="left:1445.9px;top:250.8px;font:400 23.00px/30px 'DejaVu Sans Condensed','DejaVu Sans',sans-serif;color:#333;letter-spacing:-0.332px;-webkit-text-stroke:0.35px #333;">SELECT</div>
<svg class="abs" style="left:1528.7px;top:261.8px;" width="11.0" height="7.0" viewBox="0 0 11 7" preserveAspectRatio="none"><path d="M0 0H11 L5.5 7Z" fill="#333"/></svg>
<svg class="abs" style="left:290.0px;top:180.5px;" width="60.0" height="55.5" viewBox="0 0 60 55.5" preserveAspectRatio="none"><path d="M1 14L9 1H51L59 14V51Q59 54.5 55.5 54.5H4.5Q1 54.5 1 51Z" fill="#ececec" stroke="#6a6a6a" stroke-width="2"/><path d="M2 14H58V24H2Z" fill="#dadada"/><path d="M1.5 14H58.5" stroke="#6a6a6a" stroke-width="0"/><rect x="49" y="15" width="6" height="6" fill="#6a6a6a"/><rect x="5" y="23" width="50" height="27" rx="5" fill="#5f5f5f"/><path d="M10 47L22 29L30 41L38 29L50 47Z" fill="#fff"/><path d="M25 24H35V33L30 41L25 33Z" fill="#ee7a30"/></svg>
<svg class="abs" style="left:423.5px;top:176.0px;" width="62.0" height="62.0" viewBox="0 0 62 62" preserveAspectRatio="none"><g fill="none" stroke="#b4b4b4" stroke-width="2"><path d="M1 5H33V51H1ZM9 51V18H24V41"/><path d="M17 41V25"/></g><rect x="31" y="32" width="29" height="29" fill="#f4f4f4" stroke="#b4b4b4" stroke-width="1.8"/><rect x="31" y="32" width="29" height="6" fill="#c4c4c4"/><g fill="#78b9e8"><rect x="34.5" y="43" width="4" height="3.5"/><rect x="34.5" y="51" width="4" height="3.5"/></g><rect x="41" y="43.5" width="16" height="2.2" fill="#9ac7ea"/><rect x="41" y="51.5" width="16" height="2.2" fill="#b4b4b4"/><circle cx="46" cy="16" r="16" fill="#0d97d9"/><path d="M34 27Q37 22.5 41.5 21L40 16L48 10L53.5 17L46.5 23L43 21.5" fill="none" stroke="#fff" stroke-width="3"/><path d="M40.5 16.5L48 10.5L53 17L46 23Z" fill="#fff"/><path d="M47.5 9.5L51 4.5M53 15L58 11.5" stroke="#fff" stroke-width="3.2"/></svg>
<svg class="abs" style="left:573.0px;top:178.0px;" width="60.0" height="62.0" viewBox="0 0 60 62" preserveAspectRatio="none"><rect x="1.5" y="1.2" width="52" height="44.5" fill="#f4f4f4" stroke="#5a5a5a" stroke-width="2"/><rect x="1.5" y="1.2" width="52" height="6" fill="#5a5a5a"/><rect x="3.5" y="2.6" width="3.6" height="3" fill="#f4f4f4"/><path d="M7 14L12.5 18.5L7 23M14 24H30" fill="none" stroke="#5a5a5a" stroke-width="2"/><circle cx="44.5" cy="47.5" r="17" fill="#f2f2f2"/><g transform="translate(30 33) scale(1.074)"><path d="M26.44 10.88 L26.44 16.12 L22.61 16.52 L22.08 17.81 L24.50 20.79 L20.79 24.50 L17.81 22.08 L16.52 22.61 L16.12 26.44 L10.88 26.44 L10.48 22.61 L9.19 22.08 L6.21 24.50 L2.50 20.79 L4.92 17.81 L4.39 16.52 L0.56 16.12 L0.56 10.88 L4.39 10.48 L4.92 9.19 L2.50 6.21 L6.21 2.50 L9.19 4.92 L10.48 4.39 L10.88 0.56 L16.12 0.56 L16.52 4.39 L17.81 4.92 L20.79 2.50 L24.50 6.21 L22.08 9.19 L22.61 10.48Z" fill="#5a5a5a"/><circle cx="13.5" cy="13.5" r="4.6" fill="#f2f2f2"/></g></svg>
<svg class="abs" style="left:720.0px;top:176.0px;" width="40.0" height="63.5" viewBox="0 0 40 63.5" preserveAspectRatio="none"><rect x="0" y="0" width="40" height="63.5" rx="7" fill="#8a8a8a"/><rect x="4" y="0" width="32" height="63.5" rx="5" fill="#6e6e6e"/><circle cx="20" cy="16" r="12" fill="#fb3030"/><circle cx="20" cy="46" r="14.5" fill="#fff"/><circle cx="20" cy="46" r="12" fill="#1fae4c"/></svg>
<svg class="abs" style="left:803.0px;top:178.9px;" width="46.4" height="58.0" viewBox="0 0 46.4 58" preserveAspectRatio="none"><rect x="0.8" y="0.8" width="44.8" height="56.4" fill="#f7f7f7" stroke="#8d8d8d" stroke-width="1.4"/><rect x="0.8" y="0.8" width="44.8" height="4.5" fill="#d0d0d0"/><rect x="5" y="10.5" width="10" height="3.6" fill="#a9b3c9"/><rect x="18" y="10.5" width="10" height="3.6" fill="#a9b3c9"/><rect x="31" y="10.5" width="10" height="3.6" fill="#a9b3c9"/><rect x="5" y="17.5" width="10" height="3.6" fill="#a9b3c9"/><rect x="18" y="17.5" width="10" height="3.6" fill="#a9b3c9"/><rect x="31" y="17.5" width="10" height="3.6" fill="#a9b3c9"/><rect x="5" y="24.5" width="10" height="3.6" fill="#a9b3c9"/><rect x="18" y="24.5" width="10" height="3.6" fill="#a9b3c9"/><rect x="31" y="24.5" width="10" height="3.6" fill="#a9b3c9"/><rect x="5" y="31.5" width="10" height="3.6" fill="#a9b3c9"/><rect x="18" y="31.5" width="10" height="3.6" fill="#a9b3c9"/><rect x="31" y="31.5" width="10" height="3.6" fill="#a9b3c9"/><circle cx="16.5" cy="47" r="7.5" fill="#6f9fd8"/><path d="M16.5 47L16.5 39.5A7.5 7.5 0 0 0 9.5 44Z" fill="#e07070"/><path d="M16.5 47L23 50.5A7.5 7.5 0 0 1 12 53Z" fill="#f1c84b"/><circle cx="34.5" cy="47" r="7.5" fill="#fff" stroke="#444" stroke-width="1.2"/><circle cx="34.5" cy="47" r="5.5" fill="none" stroke="#666" stroke-width="2.4" stroke-dasharray="1.5 1.2"/><circle cx="34.5" cy="47" r="2" fill="#888"/></svg>
<svg class="abs" style="left:905.8px;top:192.5px;" width="56.5" height="31.0" viewBox="0 0 56.5 31" preserveAspectRatio="none"><path d="M1.2 0V17M55.3 0V17" stroke="#555" stroke-width="1.6"/><path d="M3 8.5H53" stroke="#555" stroke-width="1.8"/><path d="M2.5 8.5L11 4V13ZM54 8.5L45.5 4V13Z" fill="#555"/><rect x="0" y="20" width="56.5" height="11" fill="#f7a800"/><rect x="4" y="20" width="1.5" height="5" fill="#8a5a00"/><rect x="9.35" y="20" width="1.5" height="3.2" fill="#8a5a00"/><rect x="14.7" y="20" width="1.5" height="3.2" fill="#8a5a00"/><rect x="20.05" y="20" width="1.5" height="3.2" fill="#8a5a00"/><rect x="25.4" y="20" width="1.5" height="3.2" fill="#8a5a00"/><rect x="30.75" y="20" width="1.5" height="5" fill="#8a5a00"/><rect x="36.1" y="20" width="1.5" height="3.2" fill="#8a5a00"/><rect x="41.45" y="20" width="1.5" height="3.2" fill="#8a5a00"/><rect x="46.8" y="20" width="1.5" height="3.2" fill="#8a5a00"/><rect x="52.15" y="20" width="1.5" height="3.2" fill="#8a5a00"/></svg>
<svg class="abs" style="left:988.3px;top:176.6px;" width="64.0" height="63.0" viewBox="0 0 64 63" preserveAspectRatio="none"><rect x="1.2" y="1.2" width="42" height="42" fill="#f2f2f2" stroke="#6a6a6a" stroke-width="2"/><rect x="20.8" y="20.8" width="42" height="41" fill="#f2f2f2" stroke="#6a6a6a" stroke-width="2"/><rect x="19.8" y="19.8" width="24.4" height="24.4" fill="#cf5a5a"/></svg>
<svg class="abs" style="left:1074.3px;top:176.0px;" width="64.0" height="63.5" viewBox="0 0 64 63.5" preserveAspectRatio="none"><defs><clipPath id="brl"><path d="M11 0H53Q64 15 64 31.7Q64 48 53 63.5H11Q0 48 0 31.7Q0 15 11 0Z"/></clipPath></defs><g clip-path="url(#brl)"><rect x="0" y="0" width="64" height="63.5" fill="#ec7878"/><rect x="0" y="20" width="64" height="8" fill="#fba060"/><rect x="0" y="27.5" width="64" height="5" fill="#f0e030"/><rect x="0" y="32" width="64" height="5.5" fill="#6fe070"/><rect x="0" y="37" width="64" height="8" fill="#22d3dd"/><rect x="0" y="44.5" width="64" height="19" fill="#3cbcf8"/></g></svg>
<svg class="abs" style="left:1164.0px;top:176.0px;" width="57.0" height="63.0" viewBox="0 0 57 63" preserveAspectRatio="none"><path d="M0 40V50Q0 62 24 62Q48 62 48 50V40Z" fill="#ec8080"/><ellipse cx="24" cy="40" rx="24" ry="11.5" fill="#77e877"/><path d="M12 19V34Q12 41 24 41Q37 41 37 34V19Z" fill="#ec8080"/><ellipse cx="24.5" cy="19" rx="12.5" ry="8.5" fill="#77e877"/><path d="M34 1H56V9H52V10H38V9H34Z" fill="#c9c9c9" stroke="#8a8a8a" stroke-width="1"/><path d="M39.5 10H50.5V38Q45 42 39.5 38Z" fill="#fff"/><path d="M41 10H49V36Q45 39 41 36Z" fill="#a9a9a9"/><path d="M41 17L49 13M41 24L49 20M41 31L49 27M41 37L49 33" stroke="#6e6e6e" stroke-width="2.2"/></svg>
<svg class="abs" style="left:1249.8px;top:178.0px;" width="55.0" height="58.0" viewBox="0 0 55 58" preserveAspectRatio="none"><g fill="none" stroke="#9a9a9a" stroke-width="1.8"><rect x="29" y="7" width="24" height="43"/><path d="M29 28.5H53"/></g><rect x="7.5" y="7" width="21" height="43" fill="#b5d5ef" stroke="#1a8de0" stroke-width="2"/><path d="M7.5 28.5H28.5" stroke="#1a8de0" stroke-width="2"/><path d="M29 0V58" stroke="#1a8de0" stroke-width="2.2"/><path d="M14 1H1.5V11M14 57H1.5V47" fill="none" stroke="#1a8de0" stroke-width="2.2"/></svg>
<svg class="abs" style="left:1333.6px;top:178.3px;" width="61.0" height="59.5" viewBox="0 0 61 59.5" preserveAspectRatio="none"><path d="M16 0L31 8V24L16 32L1 24V8Z" fill="#f2a877"/><path d="M16 0L31 8L16 16L1 8Z" fill="#f6bd96"/><path d="M16 16L31 8V24L16 32Z" fill="#e6935c"/><path d="M44 3L60 40L42 47L26 36Z" fill="#4a9ad8"/><path d="M44 3L42 47L26 36Z" fill="#6db3e8"/><defs><radialGradient id="sph" cx="0.4" cy="0.35" r="0.7"><stop offset="0" stop-color="#b88bea"/><stop offset="1" stop-color="#9a63db"/></radialGradient></defs><circle cx="22" cy="43" r="16" fill="url(#sph)"/></svg>
<div class="abs" style="left:1454.0px;top:170.2px;width:76.0px;height:76.0px;background:#0696d7"></div>
<svg class="abs" style="left:1454.0px;top:170.2px;" width="76.0" height="76.0" viewBox="0 0 76 76" preserveAspectRatio="none"><rect x="7" y="7" width="54" height="42" fill="none" stroke="#7be27b" stroke-width="1.8" stroke-dasharray="6.5 3.5"/><path d="M47 32V63L54 57L59.5 69L65.5 66L60 54.5L69 53.5Z" fill="#fff"/></svg>
<div class="abs" style="left:8.1px;top:300.3px;width:598.4px;height:48.3px;background:#f2f2f2;border:1.6px solid #c9c9c9;box-sizing:border-box;box-shadow:1px 1px 0 #dcdcdc"></div>
<div class="t" style="left:58.8px;top:310.0px;font:400 22.00px/29px 'DejaVu Sans Condensed','DejaVu Sans',sans-serif;color:#555;letter-spacing:-0.328px;-webkit-text-stroke:0.3px #555;">BROWSER</div>
<svg class="abs" style="left:17.8px;top:318.6px;" width="19.6" height="12.4" viewBox="0 0 19.6 14" preserveAspectRatio="none"><path d="M9 0V14L0 7ZM19.5 0V14L10.5 7Z" fill="#2c2c2c"/></svg>
<svg class="abs" style="left:566.7px;top:316.9px;" width="16.0" height="16.0" viewBox="0 0 16 16" preserveAspectRatio="none"><rect x="0" y="0" width="16" height="16" rx="6" fill="#222"/><rect x="3" y="7" width="10" height="2" fill="#d8d8d8"/></svg>
<div class="abs" style="left:80.2px;top:360.2px;width:403.3px;height:39.4px;background:#f2f2f2"></div>
<svg class="abs" style="left:45.0px;top:372.0px;" width="15.0" height="16.0" viewBox="0 0 15 16" preserveAspectRatio="none"><path d="M14 1V14H1Z" fill="#444" stroke="#111" stroke-width="1.4" stroke-linejoin="round"/></svg>
<svg class="abs" style="left:86.0px;top:370.0px;" width="32.0" height="20.0" viewBox="0 0 32 20" preserveAspectRatio="none"><path d="M1 10Q16 -8 31 10Q16 28 1 10Z" fill="#9a9a9a"/><circle cx="16" cy="10" r="6.5" fill="#f2f2f2"/><circle cx="16" cy="10" r="3.6" fill="#9a9a9a"/></svg>
<div class="abs" style="left:130.0px;top:364.2px;width:49.8px;height:31.6px;background:#9b9b9b"></div>
<svg class="abs" style="left:138.0px;top:366.5px;" width="28.0" height="27.0" viewBox="0 0 28 27" preserveAspectRatio="none"><defs><linearGradient id="cg0" x1="0" y1="0" x2="1" y2="1"><stop offset="0" stop-color="#eef0f5"/><stop offset="1" stop-color="#b4bac8"/></linearGradient></defs><path d="M1 3.5L4 1H13L14.5 2V12H24.5L27 14V24L24.5 26.5H1Z" fill="url(#cg0)" stroke="#555" stroke-width="1.2" stroke-linejoin="round"/><path d="M1 12.5H12V26M12 3.5V12.5M14 14H24.5V26" fill="none" stroke="#7a8090" stroke-width="1"/></svg>
<svg class="abs" style="left:190.0px;top:368.5px;" width="24.0" height="22.0" viewBox="0 0 24 22" preserveAspectRatio="none"><path d="M12 1L23.2 21H0.8Z" fill="#e4e41a" stroke="#7d7d10" stroke-width="1"/><rect x="10.9" y="8" width="2.3" height="7.5" fill="#222"/><rect x="10.9" y="17" width="2.3" height="2.3" fill="#222"/></svg>
<div class="abs" style="left:230.2px;top:364.2px;width:154.0px;height:31.6px;background:#9b9b9b"></div>
<div class="t" style="left:246.7px;top:365.5px;font:700 22.50px/29px 'DejaVu Sans Condensed','DejaVu Sans',sans-serif;color:#fff;letter-spacing:0.042px;">Dozer v35</div>
<div class="abs" style="left:390.3px;top:366.3px;width:27.2px;height:27.2px;border-radius:50%;background:#6c3bb0"></div>
<div class="t" style="left:396.5px;top:367.5px;font:700 19.00px/25px 'Liberation Sans',sans-serif;color:#fff;">B</div>
<div class="abs" style="left:407.5px;top:384.5px;width:9.0px;height:9.0px;border-radius:50%;background:#fff;box-shadow:0 0 0 1.3px #333"></div>
<svg class="abs" style="left:442.5px;top:365.5px;" width="27.0" height="27.0" viewBox="0 0 27 27" preserveAspectRatio="none"><defs><radialGradient id="rd" cx="0.5" cy="0.35" r="0.7"><stop offset="0" stop-color="#fafafd"/><stop offset="1" stop-color="#b9bdc9"/></radialGradient></defs><circle cx="13.5" cy="13.5" r="12.6" fill="url(#rd)" stroke="#4a4a4a" stroke-width="1.3"/><circle cx="13.5" cy="13.5" r="5.2" fill="#333"/></svg>
<div class="abs" style="left:116.1px;top:407.8px;width:283.7px;height:39.4px;background:#f2f2f2"></div>
<svg class="abs" style="left:82.0px;top:418.0px;" width="13.0" height="19.0" viewBox="0 0 13 19" preserveAspectRatio="none"><path d="M1.2 1.5L11.5 9.5L1.2 17.5Z" fill="#fff" stroke="#222" stroke-width="1.6" stroke-linejoin="round"/></svg>
<svg class="abs" style="left:122.0px;top:414.0px;" width="27.0" height="27.0" viewBox="0 0 27 27" preserveAspectRatio="none"><path d="M26.44 10.88 L26.44 16.12 L22.61 16.52 L22.08 17.81 L24.50 20.79 L20.79 24.50 L17.81 22.08 L16.52 22.61 L16.12 26.44 L10.88 26.44 L10.48 22.61 L9.19 22.08 L6.21 24.50 L2.50 20.79 L4.92 17.81 L4.39 16.52 L0.56 16.12 L0.56 10.88 L4.39 10.48 L4.92 9.19 L2.50 6.21 L6.21 2.50 L9.19 4.92 L10.48 4.39 L10.88 0.56 L16.12 0.56 L16.52 4.39 L17.81 4.92 L20.79 2.50 L24.50 6.21 L22.08 9.19 L22.61 10.48Z" fill="#7b7b7b"/><circle cx="13.5" cy="13.5" r="4.6" fill="#f2f2f2"/></svg>
<div class="t" style="left:174.9px;top:413.0px;font:400 23.00px/30px 'DejaVu Sans Condensed','DejaVu Sans',sans-serif;color:#333;letter-spacing:0.044px;-webkit-text-stroke:0.25px #333;">Document Settings</div>
<div class="abs" style="left:116.1px;top:455.9px;width:227.6px;height:39.4px;background:#f2f2f2"></div>
<svg class="abs" style="left:82.0px;top:466.1px;" width="13.0" height="19.0" viewBox="0 0 13 19" preserveAspectRatio="none"><path d="M1.2 1.5L11.5 9.5L1.2 17.5Z" fill="#fff" stroke="#222" stroke-width="1.6" stroke-linejoin="round"/></svg>
<svg class="abs" style="left:121.9px;top:462.6px;" width="32.0" height="26.0" viewBox="0 0 32 26" preserveAspectRatio="none"><path d="M0 2Q0 0 2 0H12L15 4H30Q32 4 32 6V24Q32 26 30 26H2Q0 26 0 24Z" fill="#9a9a9a"/></svg>
<div class="t" style="left:183.0px;top:461.1px;font:400 23.00px/30px 'DejaVu Sans Condensed','DejaVu Sans',sans-serif;color:#333;letter-spacing:-0.018px;-webkit-text-stroke:0.25px #333;">Named Views</div>
<div class="abs" style="left:116.1px;top:504.0px;width:205.6px;height:39.4px;background:#f2f2f2"></div>
<svg class="abs" style="left:82.0px;top:514.2px;" width="13.0" height="19.0" viewBox="0 0 13 19" preserveAspectRatio="none"><path d="M1.2 1.5L11.5 9.5L1.2 17.5Z" fill="#fff" stroke="#222" stroke-width="1.6" stroke-linejoin="round"/></svg>
<svg class="abs" style="left:121.9px;top:511.7px;" width="32.0" height="24.0" viewBox="0 0 32 24" preserveAspectRatio="none"><g fill="none" stroke="#a6a6a6" stroke-width="1.8"><path d="M1 12Q16 -5 31 12Q16 29 1 12Z"/><circle cx="16" cy="12" r="6"/><path d="M6 1L27 23M9 0L30 22" /></g></svg>
<svg class="abs" style="left:172.0px;top:510.7px;" width="32.0" height="26.0" viewBox="0 0 32 26" preserveAspectRatio="none"><path d="M0 2Q0 0 2 0H12L15 4H30Q32 4 32 6V24Q32 26 30 26H2Q0 26 0 24Z" fill="#9a9a9a"/></svg>
<div class="t" style="left:232.5px;top:509.2px;font:400 23.00px/30px 'DejaVu Sans Condensed','DejaVu Sans',sans-serif;color:#333;letter-spacing:0.293px;-webkit-text-stroke:0.25px #333;">Origin</div>
<div class="abs" style="left:116.1px;top:552.0px;width:197.7px;height:39.4px;background:#f2f2f2"></div>
<svg class="abs" style="left:82.0px;top:562.2px;" width="13.0" height="19.0" viewBox="0 0 13 19" preserveAspectRatio="none"><path d="M1.2 1.5L11.5 9.5L1.2 17.5Z" fill="#fff" stroke="#222" stroke-width="1.6" stroke-linejoin="round"/></svg>
<svg class="abs" style="left:121.9px;top:559.7px;" width="32.0" height="24.0" viewBox="0 0 32 24" preserveAspectRatio="none"><g fill="none" stroke="#a6a6a6" stroke-width="1.8"><path d="M1 12Q16 -5 31 12Q16 29 1 12Z"/><circle cx="16" cy="12" r="6"/><path d="M6 1L27 23M9 0L30 22" /></g></svg>
<svg class="abs" style="left:172.0px;top:558.7px;" width="32.0" height="26.0" viewBox="0 0 32 26" preserveAspectRatio="none"><path d="M0 2Q0 0 2 0H12L15 4H30Q32 4 32 6V24Q32 26 30 26H2Q0 26 0 24Z" fill="#9a9a9a"/></svg>
<div class="t" style="left:232.5px;top:557.2px;font:400 23.00px/30px 'DejaVu Sans Condensed','DejaVu Sans',sans-serif;color:#333;letter-spacing:0.165px;-webkit-text-stroke:0.25px #333;">Joints</div>
<div class="abs" style="left:116.1px;top:599.9px;width:229.6px;height:39.4px;background:#f2f2f2"></div>
<svg class="abs" style="left:82.0px;top:610.1px;" width="13.0" height="19.0" viewBox="0 0 13 19" preserveAspectRatio="none"><path d="M1.2 1.5L11.5 9.5L1.2 17.5Z" fill="#fff" stroke="#222" stroke-width="1.6" stroke-linejoin="round"/></svg>
<svg class="abs" style="left:121.9px;top:607.6px;" width="32.0" height="24.0" viewBox="0 0 32 24" preserveAspectRatio="none"><g fill="none" stroke="#a6a6a6" stroke-width="1.8"><path d="M1 12Q16 -5 31 12Q16 29 1 12Z"/><circle cx="16" cy="12" r="6"/><path d="M6 1L27 23M9 0L30 22" /></g></svg>
<svg class="abs" style="left:172.0px;top:606.6px;" width="32.0" height="26.0" viewBox="0 0 32 26" preserveAspectRatio="none"><path d="M0 2Q0 0 2 0H12L15 4H30Q32 4 32 6V24Q32 26 30 26H2Q0 26 0 24Z" fill="#9a9a9a"/></svg>
<div class="t" style="left:232.5px;top:605.1px;font:400 23.00px/30px 'DejaVu Sans Condensed','DejaVu Sans',sans-serif;color:#333;letter-spacing:-0.145px;-webkit-text-stroke:0.25px #333;">Sketches</div>
<div class="abs" style="left:116.1px;top:647.8px;width:325.7px;height:39.4px;background:#f2f2f2"></div>
<svg class="abs" style="left:82.0px;top:658.0px;" width="13.0" height="19.0" viewBox="0 0 13 19" preserveAspectRatio="none"><path d="M1.2 1.5L11.5 9.5L1.2 17.5Z" fill="#fff" stroke="#222" stroke-width="1.6" stroke-linejoin="round"/></svg>
<svg class="abs" style="left:121.9px;top:657.5px;" width="32.0" height="20.0" viewBox="0 0 32 20" preserveAspectRatio="none"><path d="M1 10Q16 -8 31 10Q16 28 1 10Z" fill="#9a9a9a"/><circle cx="16" cy="10" r="6.5" fill="#f2f2f2"/><circle cx="16" cy="10" r="3.6" fill="#9a9a9a"/></svg>
<svg class="abs" style="left:174.5px;top:653.0px;" width="27.0" height="27.0" viewBox="0 0 27 27" preserveAspectRatio="none"><defs><linearGradient id="cg6" x1="0" y1="0" x2="1" y2="1"><stop offset="0" stop-color="#e9ecf2"/><stop offset="1" stop-color="#a9b0bf"/></linearGradient></defs><path d="M1 7Q1 6 2 5.6L8 1Q9 0.5 10 0.5H24Q26 0.5 25.6 2.5V19L19 25.5Q18.5 26 17 26H2.5Q1 26 1 24.5Z" fill="#fff" stroke="#555" stroke-width="1.3"/><path d="M2 7H19V25H2Z" fill="url(#cg6)"/><path d="M19 7L25 1.5V19L19 25Z" fill="#8e97a8"/><path d="M2 7L8.5 1.5H25L19 7Z" fill="#eef0f4"/></svg>
<div class="t" style="left:232.5px;top:653.0px;font:400 23.00px/30px 'DejaVu Sans Condensed','DejaVu Sans',sans-serif;color:#333;letter-spacing:0.071px;-webkit-text-stroke:0.25px #333;">Dozer Wheel v5:1</div>
<div class="abs" style="left:116.1px;top:695.8px;width:357.8px;height:39.4px;background:#f2f2f2"></div>
<svg class="abs" style="left:82.0px;top:706.0px;" width="13.0" height="19.0" viewBox="0 0 13 19" preserveAspectRatio="none"><path d="M1.2 1.5L11.5 9.5L1.2 17.5Z" fill="#fff" stroke="#222" stroke-width="1.6" stroke-linejoin="round"/></svg>
<svg class="abs" style="left:121.9px;top:705.5px;" width="32.0" height="20.0" viewBox="0 0 32 20" preserveAspectRatio="none"><path d="M1 10Q16 -8 31 10Q16 28 1 10Z" fill="#9a9a9a"/><circle cx="16" cy="10" r="6.5" fill="#f2f2f2"/><circle cx="16" cy="10" r="3.6" fill="#9a9a9a"/></svg>
<svg class="abs" style="left:174.5px;top:701.0px;" width="27.0" height="27.0" viewBox="0 0 27 27" preserveAspectRatio="none"><defs><linearGradient id="cg7" x1="0" y1="0" x2="1" y2="1"><stop offset="0" stop-color="#e9ecf2"/><stop offset="1" stop-color="#a9b0bf"/></linearGradient></defs><path d="M1 7Q1 6 2 5.6L8 1Q9 0.5 10 0.5H24Q26 0.5 25.6 2.5V19L19 25.5Q18.5 26 17 26H2.5Q1 26 1 24.5Z" fill="#fff" stroke="#555" stroke-width="1.3"/><path d="M2 7H19V25H2Z" fill="url(#cg7)"/><path d="M19 7L25 1.5V19L19 25Z" fill="#8e97a8"/><path d="M2 7L8.5 1.5H25L19 7Z" fill="#eef0f4"/></svg>
<div class="t" style="left:232.5px;top:701.0px;font:400 23.00px/30px 'DejaVu Sans Condensed','DejaVu Sans',sans-serif;color:#333;letter-spacing:-0.018px;-webkit-text-stroke:0.25px #333;">Dozer Wheel v5 (1):1</div>
<div class="abs" style="left:116.1px;top:743.8px;width:357.8px;height:39.4px;background:#f2f2f2"></div>
<svg class="abs" style="left:82.0px;top:754.0px;" width="13.0" height="19.0" viewBox="0 0 13 19" preserveAspectRatio="none"><path d="M1.2 1.5L11.5 9.5L1.2 17.5Z" fill="#fff" stroke="#222" stroke-width="1.6" stroke-linejoin="round"/></svg>
<svg class="abs" style="left:121.9px;top:753.5px;" width="32.0" height="20.0" viewBox="0 0 32 20" preserveAspectRatio="none"><path d="M1 10Q16 -8 31 10Q16 28 1 10Z" fill="#9a9a9a"/><circle cx="16" cy="10" r="6.5" fill="#f2f2f2"/><circle cx="16" cy="10" r="3.6" fill="#9a9a9a"/></svg>
<svg class="abs" style="left:174.5px;top:749.0px;" width="27.0" height="27.0" viewBox="0 0 27 27" preserveAspectRatio="none"><defs><linearGradient id="cg8" x1="0" y1="0" x2="1" y2="1"><stop offset="0" stop-color="#e9ecf2"/><stop offset="1" stop-color="#a9b0bf"/></linearGradient></defs><path d="M1 7Q1 6 2 5.6L8 1Q9 0.5 10 0.5H24Q26 0.5 25.6 2.5V19L19 25.5Q18.5 26 17 26H2.5Q1 26 1 24.5Z" fill="#fff" stroke="#555" stroke-width="1.3"/><path d="M2 7H19V25H2Z" fill="url(#cg8)"/><path d="M19 7L25 1.5V19L19 25Z" fill="#8e97a8"/><path d="M2 7L8.5 1.5H25L19 7Z" fill="#eef0f4"/></svg>
<div class="t" style="left:232.5px;top:749.0px;font:400 23.00px/30px 'DejaVu Sans Condensed','DejaVu Sans',sans-serif;color:#333;letter-spacing:-0.018px;-webkit-text-stroke:0.25px #333;">Dozer Wheel v5 (2):1</div>
<div class="abs" style="left:116.1px;top:791.8px;width:357.8px;height:39.4px;background:#f2f2f2"></div>
<svg class="abs" style="left:82.0px;top:802.0px;" width="13.0" height="19.0" viewBox="0 0 13 19" preserveAspectRatio="none"><path d="M1.2 1.5L11.5 9.5L1.2 17.5Z" fill="#fff" stroke="#222" stroke-width="1.6" stroke-linejoin="round"/></svg>
<svg class="abs" style="left:121.9px;top:801.5px;" width="32.0" height="20.0" viewBox="0 0 32 20" preserveAspectRatio="none"><path d="M1 10Q16 -8 31 10Q16 28 1 10Z" fill="#9a9a9a"/><circle cx="16" cy="10" r="6.5" fill="#f2f2f2"/><circle cx="16" cy="10" r="3.6" fill="#9a9a9a"/></svg>
<svg class="abs" style="left:174.5px;top:797.0px;" width="27.0" height="27.0" viewBox="0 0 27 27" preserveAspectRatio="none"><defs><linearGradient id="cg9" x1="0" y1="0" x2="1" y2="1"><stop offset="0" stop-color="#e9ecf2"/><stop offset="1" stop-color="#a9b0bf"/></linearGradient></defs><path d="M1 7Q1 6 2 5.6L8 1Q9 0.5 10 0.5H24Q26 0.5 25.6 2.5V19L19 25.5Q18.5 26 17 26H2.5Q1 26 1 24.5Z" fill="#fff" stroke="#555" stroke-width="1.3"/><path d="M2 7H19V25H2Z" fill="url(#cg9)"/><path d="M19 7L25 1.5V19L19 25Z" fill="#8e97a8"/><path d="M2 7L8.5 1.5H25L19 7Z" fill="#eef0f4"/></svg>
<div class="t" style="left:232.5px;top:797.0px;font:400 23.00px/30px 'DejaVu Sans Condensed','DejaVu Sans',sans-serif;color:#333;letter-spacing:-0.018px;-webkit-text-stroke:0.25px #333;">Dozer Wheel v5 (3):1</div>
<div class="abs" style="left:116.1px;top:839.8px;width:357.8px;height:39.4px;background:#f2f2f2"></div>
<svg class="abs" style="left:82.0px;top:850.0px;" width="13.0" height="19.0" viewBox="0 0 13 19" preserveAspectRatio="none"><path d="M1.2 1.5L11.5 9.5L1.2 17.5Z" fill="#fff" stroke="#222" stroke-width="1.6" stroke-linejoin="round"/></svg>
<svg class="abs" style="left:121.9px;top:849.5px;" width="32.0" height="20.0" viewBox="0 0 32 20" preserveAspectRatio="none"><path d="M1 10Q16 -8 31 10Q16 28 1 10Z" fill="#9a9a9a"/><circle cx="16" cy="10" r="6.5" fill="#f2f2f2"/><circle cx="16" cy="10" r="3.6" fill="#9a9a9a"/></svg>
<svg class="abs" style="left:174.5px;top:845.0px;" width="27.0" height="27.0" viewBox="0 0 27 27" preserveAspectRatio="none"><defs><linearGradient id="cg10" x1="0" y1="0" x2="1" y2="1"><stop offset="0" stop-color="#e9ecf2"/><stop offset="1" stop-color="#a9b0bf"/></linearGradient></defs><path d="M1 7Q1 6 2 5.6L8 1Q9 0.5 10 0.5H24Q26 0.5 25.6 2.5V19L19 25.5Q18.5 26 17 26H2.5Q1 26 1 24.5Z" fill="#fff" stroke="#555" stroke-width="1.3"/><path d="M2 7H19V25H2Z" fill="url(#cg10)"/><path d="M19 7L25 1.5V19L19 25Z" fill="#8e97a8"/><path d="M2 7L8.5 1.5H25L19 7Z" fill="#eef0f4"/></svg>
<div class="t" style="left:232.5px;top:845.0px;font:400 23.00px/30px 'DejaVu Sans Condensed','DejaVu Sans',sans-serif;color:#333;letter-spacing:-0.018px;-webkit-text-stroke:0.25px #333;">Dozer Wheel v5 (4):1</div>
<div class="abs" style="left:116.1px;top:887.8px;width:357.8px;height:39.4px;background:#f2f2f2"></div>
<svg class="abs" style="left:82.0px;top:898.0px;" width="13.0" height="19.0" viewBox="0 0 13 19" preserveAspectRatio="none"><path d="M1.2 1.5L11.5 9.5L1.2 17.5Z" fill="#fff" stroke="#222" stroke-width="1.6" stroke-linejoin="round"/></svg>
<svg class="abs" style="left:121.9px;top:897.5px;" width="32.0" height="20.0" viewBox="0 0 32 20" preserveAspectRatio="none"><path d="M1 10Q16 -8 31 10Q16 28 1 10Z" fill="#9a9a9a"/><circle cx="16" cy="10" r="6.5" fill="#f2f2f2"/><circle cx="16" cy="10" r="3.6" fill="#9a9a9a"/></svg>
<svg class="abs" style="left:174.5px;top:893.0px;" width="27.0" height="27.0" viewBox="0 0 27 27" preserveAspectRatio="none"><defs><linearGradient id="cg11" x1="0" y1="0" x2="1" y2="1"><stop offset="0" stop-color="#e9ecf2"/><stop offset="1" stop-color="#a9b0bf"/></linearGradient></defs><path d="M1 7Q1 6 2 5.6L8 1Q9 0.5 10 0.5H24Q26 0.5 25.6 2.5V19L19 25.5Q18.5 26 17 26H2.5Q1 26 1 24.5Z" fill="#fff" stroke="#555" stroke-width="1.3"/><path d="M2 7H19V25H2Z" fill="url(#cg11)"/><path d="M19 7L25 1.5V19L19 25Z" fill="#8e97a8"/><path d="M2 7L8.5 1.5H25L19 7Z" fill="#eef0f4"/></svg>
<div class="t" style="left:232.5px;top:893.0px;font:400 23.00px/30px 'DejaVu Sans Condensed','DejaVu Sans',sans-serif;color:#333;letter-spacing:-0.018px;-webkit-text-stroke:0.25px #333;">Dozer Wheel v5 (5):1</div>
<div class="abs" style="left:116.1px;top:935.8px;width:293.6px;height:39.4px;background:#f2f2f2"></div>
<svg class="abs" style="left:82.0px;top:946.0px;" width="13.0" height="19.0" viewBox="0 0 13 19" preserveAspectRatio="none"><path d="M1.2 1.5L11.5 9.5L1.2 17.5Z" fill="#fff" stroke="#222" stroke-width="1.6" stroke-linejoin="round"/></svg>
<svg class="abs" style="left:121.9px;top:945.5px;" width="32.0" height="20.0" viewBox="0 0 32 20" preserveAspectRatio="none"><path d="M1 10Q16 -8 31 10Q16 28 1 10Z" fill="#9a9a9a"/><circle cx="16" cy="10" r="6.5" fill="#f2f2f2"/><circle cx="16" cy="10" r="3.6" fill="#9a9a9a"/></svg>
<svg class="abs" style="left:173.5px;top:941.0px;" width="27.0" height="27.0" viewBox="0 0 27 27" preserveAspectRatio="none"><defs><linearGradient id="cg12" x1="0" y1="0" x2="1" y2="1"><stop offset="0" stop-color="#e9ecf2"/><stop offset="1" stop-color="#a9b0bf"/></linearGradient></defs><path d="M1 7Q1 6 2 5.6L8 1Q9 0.5 10 0.5H24Q26 0.5 25.6 2.5V19L19 25.5Q18.5 26 17 26H2.5Q1 26 1 24.5Z" fill="#fff" stroke="#555" stroke-width="1.3"/><path d="M2 7H19V25H2Z" fill="url(#cg12)"/><path d="M19 7L25 1.5V19L19 25Z" fill="#8e97a8"/><path d="M2 7L8.5 1.5H25L19 7Z" fill="#eef0f4"/></svg>
<svg class="abs" style="left:187.0px;top:951.5px;" width="16.0" height="21.0" viewBox="0 0 16 21" preserveAspectRatio="none"><path d="M4 1H12L11 6L14 11H2L5 6Z" fill="#e0582a" stroke="#a03a18" stroke-width="0.8"/><path d="M8 11V20" stroke="#333" stroke-width="1.6"/></svg>
<div class="t" style="left:232.5px;top:941.0px;font:400 23.00px/30px 'DejaVu Sans Condensed','DejaVu Sans',sans-serif;color:#333;letter-spacing:0.288px;-webkit-text-stroke:0.25px #333;">Component4:1</div>
<div class="abs" style="left:116.1px;top:983.8px;width:351.5px;height:39.4px;background:#f2f2f2"></div>
<svg class="abs" style="left:82.0px;top:994.0px;" width="13.0" height="19.0" viewBox="0 0 13 19" preserveAspectRatio="none"><path d="M1.2 1.5L11.5 9.5L1.2 17.5Z" fill="#fff" stroke="#222" stroke-width="1.6" stroke-linejoin="round"/></svg>
<svg class="abs" style="left:121.9px;top:993.5px;" width="32.0" height="20.0" viewBox="0 0 32 20" preserveAspectRatio="none"><path d="M1 10Q16 -8 31 10Q16 28 1 10Z" fill="#9a9a9a"/><circle cx="16" cy="10" r="6.5" fill="#f2f2f2"/><circle cx="16" cy="10" r="3.6" fill="#9a9a9a"/></svg>
<svg class="abs" style="left:173.5px;top:989.0px;" width="29.0" height="28.0" viewBox="0 0 29 28" preserveAspectRatio="none"><defs><linearGradient id="cgL" x1="0" y1="0" x2="1" y2="1"><stop offset="0" stop-color="#eef0f5"/><stop offset="1" stop-color="#b4bac8"/></linearGradient></defs><path d="M1 3.5L4 1H13L14.5 2V12H25.5L28 14V25L25.5 27.5H1Z" fill="url(#cgL)" stroke="#555" stroke-width="1.2" stroke-linejoin="round"/><path d="M1 13H12V27M12 3.5V13M14 14.5H25.5V27" fill="none" stroke="#7a8090" stroke-width="1"/></svg>
<svg class="abs" style="left:221.0px;top:987.5px;" width="34.0" height="32.0" viewBox="0 0 34 32" preserveAspectRatio="none"><g fill="none" stroke="#3c3c3c" stroke-width="3.4"><rect x="11" y="2" width="15" height="10" rx="5" transform="rotate(-38 18.5 7)"/><rect x="1" y="12" width="15" height="10" rx="5" transform="rotate(-38 8.5 17)"/></g><path d="M20 11L32 31H8Z" fill="#e4e41a" stroke="#8a8a10" stroke-width="0.8"/><rect x="19" y="17" width="2.2" height="7.5" fill="#333"/><rect x="19" y="26" width="2.2" height="2.4" fill="#333"/></svg>
<div class="t" style="left:282.9px;top:989.0px;font:400 23.00px/30px 'DejaVu Sans Condensed','DejaVu Sans',sans-serif;color:#333;letter-spacing:0.151px;-webkit-text-stroke:0.25px #333;">DozerFace v2:1</div>
<div class="abs" style="left:8.1px;top:2413.6px;width:598.4px;height:48.6px;background:#f2f2f2;border:1.6px solid #c9c9c9;box-sizing:border-box;box-shadow:1px 1px 0 #dcdcdc"></div>
<div class="t" style="left:58.5px;top:2423.7px;font:400 22.00px/29px 'DejaVu Sans Condensed','DejaVu Sans',sans-serif;color:#555;letter-spacing:0.935px;-webkit-text-stroke:0.3px #555;">COMMENTS</div>
<svg class="abs" style="left:567.0px;top:2430.5px;" width="16.0" height="16.0" viewBox="0 0 16 16" preserveAspectRatio="none"><circle cx="8" cy="8" r="8" fill="#222"/><path d="M8 3.5V12.5M3.5 8H12.5" stroke="#e8e8e8" stroke-width="2"/></svg>
<div class="abs" style="left:1820.0px;top:2412.3px;width:474.2px;height:47.3px;background:#f2f2f2"></div>
<div class="abs" style="left:0.0px;top:2471.8px;width:4112.0px;height:6.0px;background:#cdcdcd"></div>
<div class="abs" style="left:0.0px;top:2478.0px;width:4112.0px;height:94.0px;background:#f2f2f2"></div>
<svg class="abs" style="left:21.7px;top:2513.6px;" width="23.0" height="25.0" viewBox="0 0 23 25" preserveAspectRatio="none"><rect x="0" y="0" width="4" height="25" fill="#666"/><path d="M23 0V25L4.5 12.5Z" fill="#666"/></svg>
<svg class="abs" style="left:70.9px;top:2513.6px;" width="26.0" height="25.0" viewBox="0 0 26 25" preserveAspectRatio="none"><path d="M19 0V25L0 12.5Z" fill="#666"/><rect x="22" y="7" width="4" height="11" fill="#666"/></svg>
<svg class="abs" style="left:121.6px;top:2511.5px;" width="24.5" height="29.0" viewBox="0 0 24.5 29" preserveAspectRatio="none"><path d="M0 0L24.5 14.5L0 29Z" fill="#666"/></svg>
<svg class="abs" style="left:170.0px;top:2513.6px;" width="26.0" height="25.0" viewBox="0 0 26 25" preserveAspectRatio="none"><rect x="0" y="7" width="4" height="11" fill="#666"/><path d="M7 0L26 12.5L7 25Z" fill="#666"/></svg>
<svg class="abs" style="left:222.0px;top:2513.6px;" width="23.0" height="25.0" viewBox="0 0 23 25" preserveAspectRatio="none"><path d="M0 0L18.5 12.5L0 25Z" fill="#666"/><rect x="19" y="0" width="4" height="25" fill="#666"/></svg>
<svg class="abs" style="left:0;top:2480px" width="4112" height="92" viewBox="0 2480 4112 92"><defs>
<g id="tl_sk"><rect x="2.5" y="2.5" width="25" height="25" fill="none" stroke="#9a9a9a" stroke-width="1.3"/><g fill="#2a8be0"><rect x="0.5" y="0.5" width="3.4" height="3.4"/><rect x="25.5" y="0.5" width="3.4" height="3.4"/><rect x="0.5" y="25.5" width="3.4" height="3.4"/><rect x="7" y="7" width="3" height="3"/><rect x="18.5" y="7" width="3" height="3"/><rect x="7" y="18.5" width="3" height="3"/></g><path d="M9 8.5H20M8.5 9V20M20 9Q20 20 9 20" fill="none" stroke="#555" stroke-width="1.3"/><path d="M16 30L18.5 23.5L26.5 15.5L30.5 19.5L22.5 27.5Z" fill="#f3b743"/><path d="M16 30L18.5 23.5L22.5 27.5Z" fill="#555"/><circle cx="28.5" cy="17" r="3.2" fill="#f03030"/></g>
<g id="tl_ex"><path d="M1 26H19L26 20V24L19 30H1Z" fill="#c4c4c4"/><path d="M1 7H19V26H1Z" fill="#6ab0e6"/><path d="M1 7L8 1H26L19 7Z" fill="#8ac4ef"/><path d="M19 7L26 1V20L19 26Z" fill="#4690cf"/><path d="M28.5 26V4" stroke="#222" stroke-width="1.5"/><path d="M28.5 0.5L31 6H26Z" fill="#222"/></g>
<g id="tl_fi"><path d="M1 8L8 1H18Q31 3 31 16V22L24 30H1Z" fill="#dcdcdc" stroke="#666" stroke-width="1.2" stroke-linejoin="round"/><path d="M24 30V24L31 17" fill="none" stroke="#888" stroke-width="1"/><path d="M1 30H24L31 22V18L24 25H1Z" fill="#bcbcbc"/><path d="M15 3L18 1Q31 3 31 16L25 20Q26 8 15 3Z" fill="#6ab0e6"/></g>
<g id="tl_nc"><path d="M1 11L8 5H27V21L20 29H1Z" fill="#dedede" stroke="#555" stroke-width="1.6" stroke-linejoin="round"/><path d="M20 29V23L27 16" fill="none" stroke="#888" stroke-width="1"/><path d="M20 23H8" stroke="#aaa" stroke-width="1"/><path d="M23 -1L25 4.5L30 2L27.5 7L33 9L27.5 11L30 16L25 13.5L23 19L21 13.5L16 16L18.5 11L13 9L18.5 7L16 2L21 4.5Z" fill="#f8a51b" transform="translate(0 -1)"/></g>
<g id="tl_rv"><path d="M1 14Q16 3 31 14V24Q16 14 1 24Z" fill="#6ab0e6"/><path d="M1 14Q16 6 31 14V17Q16 8 1 17Z" fill="#9dd0f5"/><path d="M1 24Q16 14 31 24L27 29Q16 24 5 29Z" fill="#3f8fd0" opacity="0"/><path d="M1 14V24Q5 29 9 28Q16 22 23 28Q28 29 31 24V14Q16 24 1 14Z" fill="#4a9ade"/><path d="M26 14L31 13V24L26 28Z" fill="#fff" stroke="#666" stroke-width="1"/><path d="M3 6Q16 -2 30 7" fill="none" stroke="#222" stroke-width="1.4"/><path d="M1 8L7 3.5L6.5 9Z" fill="#222"/></g>
<g id="tl_gr"><g fill="none" stroke="#666" stroke-width="1.8"><rect x="1" y="9" width="6.5" height="10.5"/><rect x="12.5" y="9" width="6.5" height="10.5"/><rect x="24" y="9" width="6.5" height="10.5"/></g></g>
<g id="tl_pin"><g transform="translate(-3 -3) scale(1.22) rotate(40 16 15)"><path d="M10 3H22L20.5 10L24 17H8L11.5 10Z" fill="#e9913f" stroke="#b86a24" stroke-width="1"/><path d="M12 3.5H17L15.5 10L17.5 16.5H9.5L12.5 10Z" fill="#f4b778"/><path d="M16 17V30" stroke="#7a5a2a" stroke-width="1.8"/></g></g>
<g id="tl_pinx"><g opacity="0.55"><g transform="translate(-3 -3) scale(1.22) rotate(40 16 15)"><path d="M10 3H22L20.5 10L24 17H8L11.5 10Z" fill="#e9913f" stroke="#b86a24" stroke-width="1"/><path d="M12 3.5H17L15.5 10L17.5 16.5H9.5L12.5 10Z" fill="#f4b778"/><path d="M16 17V30" stroke="#7a5a2a" stroke-width="1.8"/></g></g><path d="M2 3L27 28" stroke="#e02020" stroke-width="2"/></g>
<g id="tl_flag"><rect x="1" y="1" width="13" height="29" fill="#fff" stroke="#666" stroke-width="1.2"/><rect x="14" y="1" width="17" height="12" fill="#5aa7e6"/></g>
<g id="tl_jt"><path d="M1 9L9 2V22L5 30L1 27Z" fill="#e4e4e4" stroke="#777" stroke-width="1.2" stroke-linejoin="round"/><path d="M9 2Q13 4 13 10V24L5 30" fill="#c9c9c9" stroke="#777" stroke-width="1.2" stroke-linejoin="round"/><path d="M18 9L25 5Q28 8 28 14V29L21 24Z" fill="#dcdcdc" stroke="#777" stroke-width="1.2" stroke-linejoin="round"/><path d="M18 9V26L21 24" fill="none" stroke="#777" stroke-width="1.2"/><path d="M15.5 8V16M11 16H15.5" stroke="#2a8be0" stroke-width="1.4" fill="none"/><path d="M15.5 19L13.5 15.5H17.5Z" fill="#2a8be0"/></g>
<g id="tl_ad"><circle cx="22" cy="16" r="8" fill="#8fb4e4" stroke="#3a5f9a" stroke-width="1.3"/><path d="M14 16H5" stroke="#111" stroke-width="3.4"/><path d="M0 16L8.5 9.5V22.5Z" fill="#111"/></g>
<g id="tl_lb"><path d="M1 9L9 1H31V22L23 31H1Z" fill="#d4d4d4" stroke="#666" stroke-width="1.6" stroke-linejoin="round"/><path d="M1 9H23V31M23 9L31 1" fill="none" stroke="#888" stroke-width="1.2"/><g fill="none" stroke="#6e6e6e" stroke-width="2.6"><rect x="12" y="9" width="12" height="8" rx="4" transform="rotate(-35 18 13)"/><rect x="4" y="15" width="12" height="8" rx="4" transform="rotate(-35 10 19)"/></g></g>
<g id="tl_plus"><rect x="0" y="0" width="18" height="18" rx="2" fill="#555"/><path d="M9 3V15M3 9H15" stroke="#fff" stroke-width="2.6"/></g>
</defs>
<path d="M307.6 2558.5H2229.2" stroke="#c9c9c9" stroke-width="3.2"/>
<path d="M309.2 2546V2559M357.2 2546V2559M405.1 2546V2559M453.1 2546V2559M501.0 2546V2559M549.0 2546V2559M597.0 2546V2559M644.9 2546V2559M692.9 2546V2559M740.8 2546V2559M788.8 2546V2559M836.8 2546V2559M884.7 2546V2559M932.7 2546V2559M980.6 2546V2559M1028.6 2546V2559M1076.6 2546V2559M1124.5 2546V2559M1172.5 2546V2559M1220.4 2546V2559M1268.4 2546V2559M1316.4 2546V2559M1364.3 2546V2559M1412.3 2546V2559M1460.2 2546V2559M1508.2 2546V2559M1556.2 2546V2559M1604.1 2546V2559M1652.1 2546V2559M1700.0 2546V2559M1748.0 2546V2559M1796.0 2546V2559M1843.9 2546V2559M1891.9 2546V2559M1939.8 2546V2559M1987.8 2546V2559M2035.8 2546V2559M2083.7 2546V2559M2131.7 2546V2559M2179.6 2546V2559M2227.6 2546V2559" stroke="#c9c9c9" stroke-width="3.2"/>
<use href="#tl_sk" x="292.2" y="2508.5"/>
<use href="#tl_ex" x="340.2" y="2508.5"/>
<use href="#tl_fi" x="388.1" y="2508.5"/>
<use href="#tl_sk" x="436.1" y="2508.5"/>
<use href="#tl_ex" x="484.0" y="2508.5"/>
<use href="#tl_sk" x="532.0" y="2508.5"/>
<use href="#tl_nc" x="580.0" y="2508.5"/>
<use href="#tl_rv" x="627.9" y="2508.5"/>
<use href="#tl_nc" x="675.9" y="2508.5"/>
<use href="#tl_rv" x="723.8" y="2508.5"/>
<use href="#tl_sk" x="771.8" y="2508.5"/>
<use href="#tl_nc" x="819.8" y="2508.5"/>
<use href="#tl_ex" x="867.7" y="2508.5"/>
<use href="#tl_sk" x="915.7" y="2508.5"/>
<use href="#tl_ex" x="963.6" y="2508.5"/>
<use href="#tl_sk" x="1011.6" y="2508.5"/>
<use href="#tl_ex" x="1059.6" y="2508.5"/>
<use href="#tl_sk" x="1107.5" y="2508.5"/>
<use href="#tl_ex" x="1155.5" y="2508.5"/>
<use href="#tl_gr" x="1203.4" y="2508.5"/>
<use href="#tl_plus" x="1211.4" y="2548"/>
<use href="#tl_gr" x="1251.4" y="2508.5"/>
<use href="#tl_plus" x="1259.4" y="2548"/>
<use href="#tl_gr" x="1299.4" y="2508.5"/>
<use href="#tl_plus" x="1307.4" y="2548"/>
<use href="#tl_gr" x="1347.3" y="2508.5"/>
<use href="#tl_plus" x="1355.3" y="2548"/>
<use href="#tl_gr" x="1395.3" y="2508.5"/>
<use href="#tl_plus" x="1403.3" y="2548"/>
<use href="#tl_gr" x="1443.2" y="2508.5"/>
<use href="#tl_plus" x="1451.2" y="2548"/>
<use href="#tl_gr" x="1491.2" y="2508.5"/>
<use href="#tl_plus" x="1499.2" y="2548"/>
<use href="#tl_pin" x="1539.2" y="2508.5"/>
<use href="#tl_pinx" x="1587.1" y="2508.5"/>
<use href="#tl_flag" x="1635.1" y="2508.5"/>
<use href="#tl_pin" x="1683.0" y="2508.5"/>
<use href="#tl_jt" x="1731.0" y="2508.5"/>
<use href="#tl_jt" x="1779.0" y="2508.5"/>
<use href="#tl_jt" x="1826.9" y="2508.5"/>
<use href="#tl_jt" x="1874.9" y="2508.5"/>
<use href="#tl_jt" x="1922.8" y="2508.5"/>
<use href="#tl_jt" x="1970.8" y="2508.5"/>
<use href="#tl_ad" x="2018.8" y="2508.5"/>
<use href="#tl_ad" x="2066.7" y="2508.5"/>
<use href="#tl_ad" x="2114.7" y="2508.5"/>
<use href="#tl_ad" x="2162.6" y="2508.5"/>
<use href="#tl_lb" x="2210.6" y="2508.5"/>
<path d="M2240 2496H2264V2500L2254.5 2511V2559.5H2249V2511L2240 2500Z" fill="#5a5a5a"/>
</svg>
<svg class="abs" style="left:4054.0px;top:2511.0px;" width="32.0" height="32.0" viewBox="0 0 27 27" preserveAspectRatio="none"><path d="M26.44 10.88 L26.44 16.12 L22.61 16.52 L22.08 17.81 L24.50 20.79 L20.79 24.50 L17.81 22.08 L16.52 22.61 L16.12 26.44 L10.88 26.44 L10.48 22.61 L9.19 22.08 L6.21 24.50 L2.50 20.79 L4.92 17.81 L4.39 16.52 L0.56 16.12 L0.56 10.88 L4.39 10.48 L4.92 9.19 L2.50 6.21 L6.21 2.50 L9.19 4.92 L10.48 4.39 L10.88 0.56 L16.12 0.56 L16.52 4.39 L17.81 4.92 L20.79 2.50 L24.50 6.21 L22.08 9.19 L22.61 10.48Z" fill="#7a7a7a"/><circle cx="13.5" cy="13.5" r="4.6" fill="#f2f2f2"/></svg>
<svg class="abs" style="left:4054.0px;top:2428.0px;" width="34.0" height="34.0" viewBox="0 0 34 34" preserveAspectRatio="none"><path d="M17 0A17 17 0 0 1 34 17V34H17A17 17 0 0 1 17 0Z" fill="#0a0a0a"/><path d="M8 19L22 11M11 22L25 14M16 24L26 18" stroke="#fff" stroke-width="1.6"/></svg>
<svg class="abs" style="left:1826.0px;top:2418.0px;" width="33.0" height="36.0" viewBox="0 0 33 36" preserveAspectRatio="none"><ellipse cx="16" cy="18" rx="7" ry="16" fill="none" stroke="#444" stroke-width="1.5"/><ellipse cx="16" cy="18" rx="15" ry="7" fill="none" stroke="#444" stroke-width="1.5"/><path d="M16 14V22M12 18H20" stroke="#2a8be0" stroke-width="1.6"/><path d="M24 9L29 8L27 13Z" fill="#444"/></svg>
<svg class="abs" style="left:1868.0px;top:2433.0px;" width="11.0" height="7.0" viewBox="0 0 11 7" preserveAspectRatio="none"><path d="M0 0H11 L5.5 7Z" fill="#333"/></svg>
<svg class="abs" style="left:1893.0px;top:2422.0px;" width="31.0" height="28.0" viewBox="0 0 31 28" preserveAspectRatio="none"><path d="M1 10L22 1V10ZM6 9L26 3V10Z" fill="#999" stroke="#555" stroke-width="1"/><rect x="1" y="10" width="29" height="17" fill="#e4e4e4" stroke="#555" stroke-width="1.6"/><rect x="6" y="14" width="19" height="9" fill="#8e98ab" stroke="#555" stroke-width="1"/></svg>
<svg class="abs" style="left:1944.0px;top:2418.0px;" width="33.0" height="36.0" viewBox="0 0 33 36" preserveAspectRatio="none"><path d="M9 20V8Q9 5.5 11 5.5Q13 5.5 13 8V4Q13 1.5 15.2 1.5Q17.4 1.5 17.4 4V5Q17.4 2.8 19.6 2.8Q21.8 2.8 21.8 5V8Q21.8 6 24 6Q26 6 26 8.5V22Q26 30 20 34H11Q7 30 2 21Q1 18 3.5 17.5Q6 17.5 9 22Z" fill="#fff" stroke="#444" stroke-width="1.6" stroke-linejoin="round"/><path d="M13 8V17M17.4 5V17M21.8 8V17" stroke="#444" stroke-width="1.3"/></svg>
<svg class="abs" style="left:1996.0px;top:2418.0px;" width="34.0" height="34.0" viewBox="0 0 34 34" preserveAspectRatio="none"><defs><radialGradient id="mg1" cx="0.35" cy="0.3" r="0.8"><stop offset="0" stop-color="#fff"/><stop offset="1" stop-color="#cfe3ea"/></radialGradient></defs><path d="M19 19L30 31" stroke="#333" stroke-width="4.5" stroke-linecap="round"/><circle cx="12.5" cy="12.5" r="11" fill="url(#mg1)" stroke="#555" stroke-width="1.6"/><path d="M26 5H33M29.5 1.5V8.5M26 11H33" stroke="#333" stroke-width="1.3"/></svg>
<svg class="abs" style="left:2048.0px;top:2418.0px;" width="34.0" height="34.0" viewBox="0 0 34 34" preserveAspectRatio="none"><rect x="0.8" y="0.8" width="28" height="30" fill="none" stroke="#555" stroke-width="1.2" stroke-dasharray="4 2.5"/><path d="M20 21L31 32" stroke="#333" stroke-width="4.5" stroke-linecap="round"/><circle cx="14" cy="14" r="11" fill="url(#mg1)" stroke="#555" stroke-width="1.6"/></svg>
<svg class="abs" style="left:2090.5px;top:2433.0px;" width="11.0" height="7.0" viewBox="0 0 11 7" preserveAspectRatio="none"><path d="M0 0H11 L5.5 7Z" fill="#333"/></svg>
<svg class="abs" style="left:2114.5px;top:2419.0px;" width="33.0" height="33.0" viewBox="0 0 33 33" preserveAspectRatio="none"><rect x="1" y="1" width="31" height="23" rx="1.5" fill="#e4e4e4" stroke="#555" stroke-width="1.6"/><rect x="4" y="4" width="25" height="17" fill="#8fb6e8" stroke="#5a7fb5" stroke-width="1"/><path d="M13 24H20V28H25V31H8V28H13Z" fill="#bdbdbd" stroke="#666" stroke-width="1"/></svg>
<svg class="abs" style="left:2150.5px;top:2433.0px;" width="11.0" height="7.0" viewBox="0 0 11 7" preserveAspectRatio="none"><path d="M0 0H11 L5.5 7Z" fill="#333"/></svg>
<svg class="abs" style="left:2176.5px;top:2420.0px;" width="32.0" height="32.0" viewBox="0 0 32 32" preserveAspectRatio="none"><defs><linearGradient id="gg1" x1="0" y1="0" x2="0" y2="1"><stop offset="0" stop-color="#fff"/><stop offset="1" stop-color="#8e96a8"/></linearGradient></defs><rect x="1" y="1" width="30" height="29" fill="url(#gg1)"/><path d="M1 1V30M1 1H31M4.75 1V30M1 4.63H31M8.5 1V30M1 8.26H31M12.25 1V30M1 11.89H31M16 1V30M1 15.52H31M19.75 1V30M1 19.15H31M23.5 1V30M1 22.78H31M27.25 1V30M1 26.41H31M31 1V30M1 30.04H31" stroke="#5a5f6e" stroke-width="0.9" fill="none"/></svg>
<svg class="abs" style="left:2213.0px;top:2433.0px;" width="11.0" height="7.0" viewBox="0 0 11 7" preserveAspectRatio="none"><path d="M0 0H11 L5.5 7Z" fill="#333"/></svg>
<svg class="abs" style="left:2238.0px;top:2422.0px;" width="31.0" height="28.0" viewBox="0 0 31 28" preserveAspectRatio="none"><rect x="0.8" y="0.8" width="29.4" height="26.4" rx="1" fill="#5f87c4" stroke="#3a5f9a" stroke-width="1.4"/><g fill="#8fb6e8"><rect x="3.5" y="3.5" width="10.5" height="9"/><rect x="17" y="3.5" width="10.5" height="9"/><rect x="3.5" y="15.5" width="10.5" height="9"/><rect x="17" y="15.5" width="10.5" height="9"/></g></svg>
<svg class="abs" style="left:2275.0px;top:2433.0px;" width="11.0" height="7.0" viewBox="0 0 11 7" preserveAspectRatio="none"><path d="M0 0H11 L5.5 7Z" fill="#333"/></svg>
<div class="abs" style="left:1628.0px;top:669.8px;width:684.0px;height:791.0px;background:#ececec;border-radius:20px;box-shadow:0 0 0 1px rgba(0,0,0,.15),0 26px 56px rgba(0,0,0,.27),0 6px 18px rgba(0,0,0,.08)"></div>
<div class="abs" style="left:1628.0px;top:669.8px;width:684.0px;height:57.0px;background:#ebebeb;border-radius:20px 20px 0 0;border-bottom:1.5px solid #d5d5d5;box-sizing:border-box"></div>
<div class="abs" style="left:1643.9px;top:685.9px;width:24.0px;height:24.0px;border-radius:50%;background:#d5d5d5;box-shadow:inset 0 0 0 1.2px #bebebe"></div>
<div class="abs" style="left:1684.0px;top:685.9px;width:24.0px;height:24.0px;border-radius:50%;background:#d5d5d5;box-shadow:inset 0 0 0 1.2px #bebebe"></div>
<div class="abs" style="left:1724.0px;top:685.9px;width:24.0px;height:24.0px;border-radius:50%;background:#d5d5d5;box-shadow:inset 0 0 0 1.2px #bebebe"></div>
<div class="t" style="left:1840.9px;top:681.0px;font:700 26.00px/34px 'Liberation Sans',sans-serif;color:#b0b0b0;letter-spacing:0.547px;">Scripts and Add-Ins</div>
<div class="abs" style="left:1668.8px;top:772.3px;width:602.8px;height:464.2px;background:#e5e5e5;border-radius:9px;box-shadow:inset 0 0 0 1.4px #dadada"></div>
<div class="abs" style="left:1673.8px;top:755.1px;width:266.3px;height:39.7px;background:#e1e1e1;border-radius:9px;box-shadow:0 0 0 1px rgba(0,0,0,.10)"></div>
<div class="abs" style="left:1673.8px;top:755.1px;width:128.0px;height:39.7px;background:#fff;border-radius:9px 0 0 9px;box-shadow:0 0.5px 2px rgba(0,0,0,.25)"></div>
<div class="t" style="left:1693.0px;top:757.5px;font:400 26.00px/34px 'Liberation Sans',sans-serif;color:#1c1c1c;letter-spacing:0.649px;">Scripts</div>
<div class="t" style="left:1826.5px;top:757.5px;font:400 26.00px/34px 'Liberation Sans',sans-serif;color:#1c1c1c;letter-spacing:0.771px;">Add-Ins</div>
<div class="abs" style="left:1714.5px;top:830.6px;width:500.0px;height:361.7px;background:#f3f3f3;box-shadow:inset 0 0 0 1.4px #a6a6a6"></div>
<div class="abs" style="left:1716.0px;top:832.0px;width:497.0px;height:36.0px;background:#c9c9c9"></div>
<svg class="abs" style="left:1716.5px;top:838.0px;" width="31.0" height="25.0" viewBox="0 0 31 25" preserveAspectRatio="none"><path d="M1 5Q1 3 3 3H10L12.5 6H24Q26 6 26 8V10H8L1 22Z" fill="#6c6c6c"/><path d="M8.5 11.5H30L23 24H1.5Z" fill="#8c8c8c" stroke="#5e5e5e" stroke-width="1"/></svg>
<svg class="abs" style="left:1716.5px;top:1074.5px;" width="31.0" height="25.0" viewBox="0 0 31 25" preserveAspectRatio="none"><path d="M1 5Q1 3 3 3H10L12.5 6H24Q26 6 26 8V10H8L1 22Z" fill="#6c6c6c"/><path d="M8.5 11.5H30L23 24H1.5Z" fill="#8c8c8c" stroke="#5e5e5e" stroke-width="1"/></svg>
<div class="t" style="left:1756.0px;top:835.5px;font:700 22.00px/29px 'DejaVu Sans Condensed','DejaVu Sans',sans-serif;color:#222;">My Scripts</div>
<div class="t" style="left:1756.0px;top:1072.1px;font:700 22.00px/29px 'DejaVu Sans Condensed','DejaVu Sans',sans-serif;color:#222;">Sample Scripts</div>
<div class="abs" style="left:1669.7px;top:1287.8px;width:150.0px;height:40.2px;background:#fff;border-radius:9px;box-shadow:0 0 0 1px rgba(0,0,0,.07),0 1px 2.5px rgba(0,0,0,.22);"></div>
<div class="t" style="left:1698.4px;top:1290.5px;font:400 26.00px/34px 'Liberation Sans',sans-serif;color:#111;letter-spacing:-0.006px;">Create</div>
<div class="abs" style="left:1670.2px;top:1384.2px;width:26.5px;height:26.5px;border-radius:5px;background:linear-gradient(#f4f4f8,#c9ccd8);box-shadow:0 0 0 1.4px #6f7280"></div>
<svg class="abs" style="left:1674.5px;top:1388.5px;" width="18.0" height="18.0" viewBox="0 0 18 18" preserveAspectRatio="none"><path d="M9 1V17M1 9H17" stroke="#111" stroke-width="3.6"/></svg>
<div class="t" style="left:1704.6px;top:1380.5px;font:400 26.00px/34px 'Liberation Sans',sans-serif;color:#111;letter-spacing:0.075px;">Details</div>
<div class="abs" style="left:1759.8px;top:802.0px;width:1599.3px;height:895.0px;background:#fff;border-radius:20px;box-shadow:0 0 0 1px rgba(0,0,0,.17),0 42px 84px rgba(0,0,0,.37),0 10px 26px rgba(0,0,0,.11)"></div>
<div class="abs" style="left:1759.8px;top:802.0px;width:1599.3px;height:895.0px;border-radius:20px;overflow:hidden">
<div class="abs" style="left:-1759.8px;top:-802.0px;width:4112px;height:2572px">
<div class="abs" style="left:2017.4px;top:925.8px;width:1342.0px;height:1.6px;background:#e6e6e6"></div>
<div class="abs" style="left:2057.6px;top:844.1px;width:46.3px;height:40.1px;background:#fff;border-radius:10px;box-shadow:0 0 0 1px rgba(0,0,0,.07),0 1px 2.5px rgba(0,0,0,.22);"></div>
<div class="abs" style="left:2105.5px;top:844.1px;width:46.4px;height:40.1px;background:#fff;border-radius:10px;box-shadow:0 0 0 1px rgba(0,0,0,.07),0 1px 2.5px rgba(0,0,0,.22);"></div>
<svg class="abs" style="left:2071.0px;top:852.0px;" width="16.0" height="24.0" viewBox="0 0 16 24" preserveAspectRatio="none"><path d="M12.5 2L3 12L12.5 22" fill="none" stroke="#1e1e1e" stroke-width="2.6" stroke-linecap="round" stroke-linejoin="round"/></svg>
<svg class="abs" style="left:2121.0px;top:852.0px;" width="16.0" height="24.0" viewBox="0 0 16 24" preserveAspectRatio="none"><path d="M3.5 2L13 12L3.5 22" fill="none" stroke="#bdbdbd" stroke-width="2.6" stroke-linecap="round" stroke-linejoin="round"/></svg>
<div class="abs" style="left:2167.4px;top:844.1px;width:92.6px;height:40.1px;background:#fff;border-radius:10px;box-shadow:0 0 0 1px rgba(0,0,0,.07),0 1px 2.5px rgba(0,0,0,.22);"></div>
<svg class="abs" style="left:2186.5px;top:852.5px;" width="30.0" height="23.0" viewBox="0 0 30 23" preserveAspectRatio="none"><rect x="1.2" y="1.2" width="27.6" height="20.6" rx="3.5" fill="none" stroke="#1e1e1e" stroke-width="2.2"/><path d="M10.5 1.5V21.5M19.5 1.5V21.5" stroke="#1e1e1e" stroke-width="2"/></svg>
<svg class="abs" style="left:2232.0px;top:859.5px;" width="15.0" height="10.0" viewBox="0 0 15 10" preserveAspectRatio="none"><path d="M1.8 1.8L7.5 7.8L13.2 1.8" fill="none" stroke="#1e1e1e" stroke-width="2.6" stroke-linecap="round" stroke-linejoin="round"/></svg>
<div class="abs" style="left:2275.6px;top:844.1px;width:90.7px;height:40.1px;background:#fff;border-radius:10px;box-shadow:0 0 0 1px rgba(0,0,0,.07),0 1px 2.5px rgba(0,0,0,.22);"></div>
<svg class="abs" style="left:2294.5px;top:850.5px;" width="28.0" height="27.0" viewBox="0 0 28 27" preserveAspectRatio="none"><path d="M1 1.5H27" stroke="#1e1e1e" stroke-width="1.8"/><rect x="1.2" y="6" width="6" height="6" rx="1.4" fill="none" stroke="#1e1e1e" stroke-width="1.7"/><rect x="1.2" y="18.5" width="6" height="6" rx="1.4" fill="none" stroke="#1e1e1e" stroke-width="1.7"/><rect x="11.1" y="6" width="6" height="6" rx="1.4" fill="none" stroke="#1e1e1e" stroke-width="1.7"/><rect x="11.1" y="18.5" width="6" height="6" rx="1.4" fill="none" stroke="#1e1e1e" stroke-width="1.7"/><rect x="21" y="6" width="6" height="6" rx="1.4" fill="none" stroke="#1e1e1e" stroke-width="1.7"/><rect x="21" y="18.5" width="6" height="6" rx="1.4" fill="none" stroke="#1e1e1e" stroke-width="1.7"/><path d="M1 15.2H27" stroke="#1e1e1e" stroke-width="1.8"/></svg>
<svg class="abs" style="left:2338.5px;top:859.5px;" width="15.0" height="10.0" viewBox="0 0 15 10" preserveAspectRatio="none"><path d="M1.8 1.8L7.5 7.8L13.2 1.8" fill="none" stroke="#1e1e1e" stroke-width="2.6" stroke-linecap="round" stroke-linejoin="round"/></svg>
<div class="abs" style="left:2481.7px;top:843.8px;width:414.4px;height:40.5px;background:#fff;border-radius:10px;box-shadow:0 0 0 1px rgba(0,0,0,.07),0 1px 2.5px rgba(0,0,0,.22);"></div>
<svg class="abs" style="left:2499.5px;top:851.5px;" width="29.0" height="26.0" viewBox="0 0 29 26" preserveAspectRatio="none"><defs><linearGradient id="pf0" x1="0" y1="0" x2="0" y2="1"><stop offset="0" stop-color="#82c4f2"/><stop offset="1" stop-color="#5eaee8"/></linearGradient></defs><path d="M0 3Q0 0.5 2.5 0.5H10Q11.5 0.5 12.5 1.8L13.8 3.5H26.5Q29 3.5 29 6V9H0Z" fill="#4a98d8"/><path d="M0 8Q0 6.5 1.5 6.5H27.5Q29 6.5 29 8V23.5Q29 26 26.5 26H2.5Q0 26 0 23.5Z" fill="url(#pf0)"/><path d="M0.5 25H28.5" stroke="#4b96d2" stroke-width="1"/></svg>
<div class="t" style="left:2539.2px;top:846.0px;font:400 26.00px/34px 'Liberation Sans',sans-serif;color:#1c1c1c;letter-spacing:0.253px;">Synthesis</div>
<div class="abs" style="left:2859.7px;top:847.9px;width:32.3px;height:31.8px;border-radius:7px;background:linear-gradient(#3f84f8,#2a6df0)"></div>
<svg class="abs" style="left:2867.5px;top:852.5px;" width="17.0" height="23.0" viewBox="0 0 17 23" preserveAspectRatio="none"><path d="M3 8.5L8.5 3L14 8.5M3 14.5L8.5 20L14 14.5" fill="none" stroke="#fff" stroke-width="2.5" stroke-linecap="round" stroke-linejoin="round"/></svg>
<div class="abs" style="left:3014.0px;top:843.8px;width:304.0px;height:40.5px;background:#fff;border-radius:10px;box-shadow:0 0 0 1px rgba(0,0,0,.07),0 1px 2.5px rgba(0,0,0,.22);"></div>
<svg class="abs" style="left:3027.5px;top:851.5px;" width="27.0" height="27.0" viewBox="0 0 27 27" preserveAspectRatio="none"><circle cx="10.5" cy="10.5" r="8.6" fill="none" stroke="#2a2a2a" stroke-width="2.4"/><path d="M17 17L25 25" stroke="#2a2a2a" stroke-width="2.6" stroke-linecap="round"/></svg>
<div class="t" style="left:3068.6px;top:846.5px;font:400 26.00px/34px 'Liberation Sans',sans-serif;color:#c2c2c2;letter-spacing:0.053px;">Search</div>
<div class="abs" style="left:2017.4px;top:982.4px;width:1342.0px;height:1.6px;background:#e6e6e6"></div>
<div class="abs" style="left:2378.4px;top:926.5px;width:1.6px;height:650.3px;background:#e4e4e4"></div>
<div class="abs" style="left:2868.0px;top:926.5px;width:1.6px;height:650.3px;background:#e4e4e4"></div>
<div class="t" style="left:2018.0px;top:941.8px;font:700 22.00px/29px 'Liberation Sans',sans-serif;color:#878787;letter-spacing:-0.941px;">erday</div>
<div class="t" style="left:2454.4px;top:941.8px;font:700 22.00px/29px 'Liberation Sans',sans-serif;color:#878787;letter-spacing:0.282px;">February</div>
<div class="t" style="left:2944.9px;top:941.8px;font:700 22.00px/29px 'Liberation Sans',sans-serif;color:#878787;letter-spacing:0.232px;">February</div>
<div class="abs" style="left:1980.0px;top:996.3px;width:377.7px;height:43.2px;background:#2961d9;border-radius:10px"></div>
<div class="t" style="left:2019.5px;top:1000.0px;font:400 26.00px/34px 'Liberation Sans',sans-serif;color:#fff;letter-spacing:-0.068px;">hesisExp…MacOS_Feb24</div>
<svg class="abs" style="left:2337.0px;top:1010.8px;" width="9.0" height="14.0" viewBox="0 0 9 14" preserveAspectRatio="none"><path d="M1.5 1.5L7 7L1.5 12.5" fill="none" stroke="#fff" stroke-width="2" stroke-linecap="round" stroke-linejoin="round"/></svg>
<div class="t" style="left:2019.5px;top:1044.0px;font:400 26.00px/34px 'Liberation Sans',sans-serif;color:#b4b4b4;letter-spacing:0.004px;">hesisExp…OS_Feb24.zip</div>
<div class="t" style="left:2018.2px;top:1150.1px;font:700 22.00px/29px 'Liberation Sans',sans-serif;color:#878787;letter-spacing:0.153px;">ous 7 Days</div>
<div class="t" style="left:2018.4px;top:1192.9px;font:400 26.00px/34px 'Liberation Sans',sans-serif;color:#b4b4b4;letter-spacing:0.275px;">mSetup.exe</div>
<div class="t" style="left:2010.5px;top:1238.0px;font:400 26.00px/34px 'Liberation Sans',sans-serif;color:#b4b4b4;letter-spacing:0.357px;">Lib_macO…2024.3.2.dmg</div>
<div class="t" style="left:2018.2px;top:1344.0px;font:700 22.00px/29px 'Liberation Sans',sans-serif;color:#878787;letter-spacing:0.509px;">ous 30 Days</div>
<div class="t" style="left:2011.5px;top:1387.7px;font:400 26.00px/34px 'Liberation Sans',sans-serif;color:#b4b4b4;letter-spacing:0.645px;">ker.dmg</div>
<div class="abs" style="left:2399.9px;top:996.4px;width:447.8px;height:43.3px;background:#2961d9;border-radius:10px"></div>
<svg class="abs" style="left:2413.5px;top:1005.0px;" width="29.0" height="26.0" viewBox="0 0 29 26" preserveAspectRatio="none"><defs><linearGradient id="pf1" x1="0" y1="0" x2="0" y2="1"><stop offset="0" stop-color="#82c4f2"/><stop offset="1" stop-color="#5eaee8"/></linearGradient></defs><path d="M0 3Q0 0.5 2.5 0.5H10Q11.5 0.5 12.5 1.8L13.8 3.5H26.5Q29 3.5 29 6V9H0Z" fill="#4a98d8"/><path d="M0 8Q0 6.5 1.5 6.5H27.5Q29 6.5 29 8V23.5Q29 26 26.5 26H2.5Q0 26 0 23.5Z" fill="url(#pf1)"/><path d="M0.5 25H28.5" stroke="#4b96d2" stroke-width="1"/></svg>
<div class="t" style="left:2454.4px;top:1000.0px;font:400 26.00px/34px 'Liberation Sans',sans-serif;color:#fff;letter-spacing:0.442px;">Synthesis</div>
<svg class="abs" style="left:2827.0px;top:1010.8px;" width="9.0" height="14.0" viewBox="0 0 9 14" preserveAspectRatio="none"><path d="M1.5 1.5L7 7L1.5 12.5" fill="none" stroke="#fff" stroke-width="2" stroke-linecap="round" stroke-linejoin="round"/></svg>
<svg class="abs" style="left:2906.5px;top:1001.9px;" width="23.0" height="30.0" viewBox="0 0 23 30" preserveAspectRatio="none"><path d="M1 2.5Q1 0.8 2.8 0.8H14L22 8.8V27Q22 28.8 20.2 28.8H2.8Q1 28.8 1 27Z" fill="#fdfdfd" stroke="#e3e3e3" stroke-width="1"/><path d="M14 0.8V7Q14 8.8 15.8 8.8H22" fill="#f0f0f0" stroke="#e0e0e0" stroke-width="0.9"/><circle cx="11.5" cy="17" r="4.2" fill="none" stroke="#b9b9b9" stroke-width="2.8" stroke-dasharray="2 1.3"/><circle cx="11.5" cy="17" r="3.4" fill="none" stroke="#b9b9b9" stroke-width="1.8"/></svg>
<div class="t" style="left:2944.8px;top:999.9px;font:400 26.00px/34px 'Liberation Sans',sans-serif;color:#b4b4b4;letter-spacing:0.770px;">config_default.ini</div>
<svg class="abs" style="left:2906.5px;top:1045.9px;" width="23.0" height="30.0" viewBox="0 0 23 30" preserveAspectRatio="none"><path d="M1 2.5Q1 0.8 2.8 0.8H14L22 8.8V27Q22 28.8 20.2 28.8H2.8Q1 28.8 1 27Z" fill="#fdfdfd" stroke="#e3e3e3" stroke-width="1"/><path d="M14 0.8V7Q14 8.8 15.8 8.8H22" fill="#f0f0f0" stroke="#e0e0e0" stroke-width="0.9"/><circle cx="11.5" cy="17" r="4.2" fill="none" stroke="#b9b9b9" stroke-width="2.8" stroke-dasharray="2 1.3"/><circle cx="11.5" cy="17" r="3.4" fill="none" stroke="#b9b9b9" stroke-width="1.8"/></svg>
<div class="t" style="left:2944.8px;top:1043.9px;font:400 26.00px/34px 'Liberation Sans',sans-serif;color:#b4b4b4;letter-spacing:0.658px;">config.ini</div>
<svg class="abs" style="left:2903.5px;top:1092.0px;" width="29.0" height="26.0" viewBox="0 0 29 26" preserveAspectRatio="none"><defs><linearGradient id="pf4" x1="0" y1="0" x2="0" y2="1"><stop offset="0" stop-color="#82c4f2"/><stop offset="1" stop-color="#5eaee8"/></linearGradient></defs><path d="M0 3Q0 0.5 2.5 0.5H10Q11.5 0.5 12.5 1.8L13.8 3.5H26.5Q29 3.5 29 6V9H0Z" fill="#4a98d8"/><path d="M0 8Q0 6.5 1.5 6.5H27.5Q29 6.5 29 8V23.5Q29 26 26.5 26H2.5Q0 26 0 23.5Z" fill="url(#pf4)"/><path d="M0.5 25H28.5" stroke="#4b96d2" stroke-width="1"/></svg>
<div class="t" style="left:2944.8px;top:1088.0px;font:400 26.00px/34px 'Liberation Sans',sans-serif;color:#1c1c1c;letter-spacing:0.326px;">logs</div>
<svg class="abs" style="left:3317.2px;top:1098.0px;" width="9.0" height="14.0" viewBox="0 0 9 14" preserveAspectRatio="none"><path d="M1.5 1.5L7 7L1.5 12.5" fill="none" stroke="#7e7e7e" stroke-width="2" stroke-linecap="round" stroke-linejoin="round"/></svg>
<svg class="abs" style="left:2903.5px;top:1136.0px;" width="29.0" height="26.0" viewBox="0 0 29 26" preserveAspectRatio="none"><defs><linearGradient id="pf5" x1="0" y1="0" x2="0" y2="1"><stop offset="0" stop-color="#82c4f2"/><stop offset="1" stop-color="#5eaee8"/></linearGradient></defs><path d="M0 3Q0 0.5 2.5 0.5H10Q11.5 0.5 12.5 1.8L13.8 3.5H26.5Q29 3.5 29 6V9H0Z" fill="#4a98d8"/><path d="M0 8Q0 6.5 1.5 6.5H27.5Q29 6.5 29 8V23.5Q29 26 26.5 26H2.5Q0 26 0 23.5Z" fill="url(#pf5)"/><path d="M0.5 25H28.5" stroke="#4b96d2" stroke-width="1"/></svg>
<div class="t" style="left:2944.8px;top:1132.0px;font:400 26.00px/34px 'Liberation Sans',sans-serif;color:#1c1c1c;letter-spacing:0.688px;">proto</div>
<svg class="abs" style="left:3317.2px;top:1142.0px;" width="9.0" height="14.0" viewBox="0 0 9 14" preserveAspectRatio="none"><path d="M1.5 1.5L7 7L1.5 12.5" fill="none" stroke="#7e7e7e" stroke-width="2" stroke-linecap="round" stroke-linejoin="round"/></svg>
<svg class="abs" style="left:2906.5px;top:1178.1px;" width="23.0" height="30.0" viewBox="0 0 23 30" preserveAspectRatio="none"><path d="M1 2.5Q1 0.8 2.8 0.8H14L22 8.8V27Q22 28.8 20.2 28.8H2.8Q1 28.8 1 27Z" fill="#fdfdfd" stroke="#e3e3e3" stroke-width="1"/><path d="M14 0.8V7Q14 8.8 15.8 8.8H22" fill="#f0f0f0" stroke="#e0e0e0" stroke-width="0.9"/><path d="M5 13H14M5 17H12M5 21H14M5 9H10" stroke="#d9d9d9" stroke-width="1.3"/></svg>
<div class="t" style="left:2944.8px;top:1176.1px;font:400 26.00px/34px 'Liberation Sans',sans-serif;color:#b4b4b4;letter-spacing:0.819px;">pyproject.toml</div>
<svg class="abs" style="left:2906.5px;top:1222.1px;" width="23.0" height="30.0" viewBox="0 0 23 30" preserveAspectRatio="none"><path d="M1 2.5Q1 0.8 2.8 0.8H14L22 8.8V27Q22 28.8 20.2 28.8H2.8Q1 28.8 1 27Z" fill="#fdfdfd" stroke="#e3e3e3" stroke-width="1"/><path d="M14 0.8V7Q14 8.8 15.8 8.8H22" fill="#f0f0f0" stroke="#e0e0e0" stroke-width="0.9"/><path d="M5 13H14M5 17H12M5 21H14M5 9H10" stroke="#d9d9d9" stroke-width="1.3"/></svg>
<div class="t" style="left:2944.8px;top:1220.1px;font:400 26.00px/34px 'Liberation Sans',sans-serif;color:#b4b4b4;letter-spacing:-0.475px;">README.md</div>
<div class="t" style="left:2911.5px;top:1241.6px;font:700 6.50px/8px 'Liberation Sans',sans-serif;color:#9a9a9a;">MD</div>
<svg class="abs" style="left:2906.5px;top:1266.1px;" width="23.0" height="30.0" viewBox="0 0 23 30" preserveAspectRatio="none"><path d="M1 2.5Q1 0.8 2.8 0.8H14L22 8.8V27Q22 28.8 20.2 28.8H2.8Q1 28.8 1 27Z" fill="#fdfdfd" stroke="#e3e3e3" stroke-width="1"/><path d="M14 0.8V7Q14 8.8 15.8 8.8H22" fill="#f0f0f0" stroke="#e0e0e0" stroke-width="0.9"/></svg>
<div class="t" style="left:2944.8px;top:1264.1px;font:400 26.00px/34px 'Liberation Sans',sans-serif;color:#b4b4b4;letter-spacing:0.681px;">requirements.txt</div>
<div class="t" style="left:2911.5px;top:1285.6px;font:700 6.50px/8px 'Liberation Sans',sans-serif;color:#9a9a9a;">TXT</div>
<svg class="abs" style="left:2903.5px;top:1312.2px;" width="29.0" height="26.0" viewBox="0 0 29 26" preserveAspectRatio="none"><defs><linearGradient id="pf9" x1="0" y1="0" x2="0" y2="1"><stop offset="0" stop-color="#82c4f2"/><stop offset="1" stop-color="#5eaee8"/></linearGradient></defs><path d="M0 3Q0 0.5 2.5 0.5H10Q11.5 0.5 12.5 1.8L13.8 3.5H26.5Q29 3.5 29 6V9H0Z" fill="#4a98d8"/><path d="M0 8Q0 6.5 1.5 6.5H27.5Q29 6.5 29 8V23.5Q29 26 26.5 26H2.5Q0 26 0 23.5Z" fill="url(#pf9)"/><path d="M0.5 25H28.5" stroke="#4b96d2" stroke-width="1"/></svg>
<div class="t" style="left:2944.8px;top:1308.2px;font:400 26.00px/34px 'Liberation Sans',sans-serif;color:#1c1c1c;letter-spacing:0.347px;">src</div>
<svg class="abs" style="left:3317.2px;top:1318.2px;" width="9.0" height="14.0" viewBox="0 0 9 14" preserveAspectRatio="none"><path d="M1.5 1.5L7 7L1.5 12.5" fill="none" stroke="#7e7e7e" stroke-width="2" stroke-linecap="round" stroke-linejoin="round"/></svg>
<svg class="abs" style="left:2906.5px;top:1354.2px;" width="23.0" height="30.0" viewBox="0 0 23 30" preserveAspectRatio="none"><path d="M1 2.5Q1 0.8 2.8 0.8H14L22 8.8V27Q22 28.8 20.2 28.8H2.8Q1 28.8 1 27Z" fill="#fdfdfd" stroke="#e3e3e3" stroke-width="1"/><path d="M14 0.8V7Q14 8.8 15.8 8.8H22" fill="#f0f0f0" stroke="#e0e0e0" stroke-width="0.9"/></svg>
<div class="t" style="left:2944.8px;top:1352.2px;font:400 26.00px/34px 'Liberation Sans',sans-serif;color:#b4b4b4;letter-spacing:0.522px;">Synthesis.manifest</div>
<svg class="abs" style="left:2906.5px;top:1398.3px;" width="23.0" height="30.0" viewBox="0 0 23 30" preserveAspectRatio="none"><path d="M1 2.5Q1 0.8 2.8 0.8H14L22 8.8V27Q22 28.8 20.2 28.8H2.8Q1 28.8 1 27Z" fill="#fdfdfd" stroke="#e3e3e3" stroke-width="1"/><path d="M14 0.8V7Q14 8.8 15.8 8.8H22" fill="#f0f0f0" stroke="#e0e0e0" stroke-width="0.9"/><path d="M5 13H14M5 17H12M5 21H14M5 9H10" stroke="#d9d9d9" stroke-width="1.3"/></svg>
<div class="t" style="left:2944.8px;top:1396.3px;font:400 26.00px/34px 'Liberation Sans',sans-serif;color:#b4b4b4;letter-spacing:0.483px;">Synthesis.py</div>
<div class="t" style="left:2911.5px;top:1417.8px;font:700 6.50px/8px 'Liberation Sans',sans-serif;color:#9a9a9a;">PY</div>
<svg class="abs" style="left:2903.5px;top:1444.3px;" width="29.0" height="26.0" viewBox="0 0 29 26" preserveAspectRatio="none"><defs><linearGradient id="pf12" x1="0" y1="0" x2="0" y2="1"><stop offset="0" stop-color="#82c4f2"/><stop offset="1" stop-color="#5eaee8"/></linearGradient></defs><path d="M0 3Q0 0.5 2.5 0.5H10Q11.5 0.5 12.5 1.8L13.8 3.5H26.5Q29 3.5 29 6V9H0Z" fill="#4a98d8"/><path d="M0 8Q0 6.5 1.5 6.5H27.5Q29 6.5 29 8V23.5Q29 26 26.5 26H2.5Q0 26 0 23.5Z" fill="url(#pf12)"/><path d="M0.5 25H28.5" stroke="#4b96d2" stroke-width="1"/></svg>
<div class="t" style="left:2944.8px;top:1440.3px;font:400 26.00px/34px 'Liberation Sans',sans-serif;color:#1c1c1c;letter-spacing:0.769px;">TemporaryOutput</div>
<svg class="abs" style="left:3317.2px;top:1450.3px;" width="9.0" height="14.0" viewBox="0 0 9 14" preserveAspectRatio="none"><path d="M1.5 1.5L7 7L1.5 12.5" fill="none" stroke="#7e7e7e" stroke-width="2" stroke-linecap="round" stroke-linejoin="round"/></svg>
<div class="abs" style="left:1759.8px;top:802.0px;width:257.6px;height:895.0px;background:#f5f5f5;border-right:1.4px solid #e4e4e4;box-sizing:border-box"></div>
<div class="t" style="left:1792.9px;top:835.8px;font:700 22.00px/29px 'Liberation Sans',sans-serif;color:#b6b6b6;letter-spacing:0.053px;">Favorites</div>
<div class="t" style="left:1792.7px;top:1235.2px;font:700 22.00px/29px 'Liberation Sans',sans-serif;color:#b6b6b6;letter-spacing:-0.071px;">iCloud</div>
<div class="t" style="left:1792.7px;top:1395.1px;font:700 22.00px/29px 'Liberation Sans',sans-serif;color:#b6b6b6;letter-spacing:0.011px;">Locations</div>
<div class="t" style="left:1792.7px;top:1555.8px;font:700 22.00px/29px 'Liberation Sans',sans-serif;color:#b6b6b6;letter-spacing:-0.029px;">Tags</div>
<div class="abs" style="left:1780.0px;top:1057.9px;width:216.0px;height:47.6px;background:#dedede;border-radius:10px"></div>
<div class="t" style="left:1832.7px;top:873.6px;font:400 23.00px/30px 'Liberation Sans',sans-serif;color:#3a3a3a;letter-spacing:-0.339px;">Recents</div>
<svg class="abs" style="left:1796.2px;top:876.9px;" width="22.4" height="22.4" viewBox="0 0 28 28" preserveAspectRatio="none"><circle cx="14" cy="14" r="12.3" fill="none" stroke="#1677f2" stroke-width="2.1"/><path d="M14 6.5V14.5H8.5" fill="none" stroke="#1677f2" stroke-width="2.1" stroke-linecap="round" stroke-linejoin="round"/></svg>
<div class="t" style="left:1832.7px;top:921.6px;font:400 23.00px/30px 'Liberation Sans',sans-serif;color:#3a3a3a;letter-spacing:0.307px;">Applications</div>
<svg class="abs" style="left:1795.4px;top:924.9px;" width="24.0" height="22.4" viewBox="0 0 30 28" preserveAspectRatio="none"><g fill="none" stroke="#1677f2" stroke-width="2.3" stroke-linecap="round"><path d="M15 3L5.5 21M12.5 3L15 7.5L24.5 25M1.5 18.5H17.5M21.5 18.5H28.5M3.5 24.5L4.5 22.5"/></g></svg>
<div class="t" style="left:1832.7px;top:969.6px;font:400 23.00px/30px 'Liberation Sans',sans-serif;color:#3a3a3a;letter-spacing:0.146px;">Desktop</div>
<svg class="abs" style="left:1795.4px;top:974.5px;" width="24.0" height="19.2" viewBox="0 0 30 24" preserveAspectRatio="none"><rect x="1.2" y="1.2" width="27.6" height="21.6" rx="3.5" fill="none" stroke="#1677f2" stroke-width="2.2"/><path d="M1.5 6.5H28.5" stroke="#1677f2" stroke-width="1.6"/><rect x="5" y="14.5" width="20" height="5" rx="1.2" fill="#1677f2"/></svg>
<div class="t" style="left:1832.7px;top:1017.6px;font:400 23.00px/30px 'Liberation Sans',sans-serif;color:#3a3a3a;letter-spacing:0.053px;">Documents</div>
<svg class="abs" style="left:1798.6px;top:1020.9px;" width="17.6" height="22.4" viewBox="0 0 22 28" preserveAspectRatio="none"><path d="M1.2 4Q1.2 1.2 4 1.2H12L20.8 10V24Q20.8 26.8 18 26.8H4Q1.2 26.8 1.2 24Z" fill="none" stroke="#1677f2" stroke-width="2.2" stroke-linejoin="round"/><path d="M12 1.5V8Q12 10 14 10H20.5" fill="none" stroke="#1677f2" stroke-width="2"/></svg>
<div class="t" style="left:1832.7px;top:1065.5px;font:400 23.00px/30px 'Liberation Sans',sans-serif;color:#3a3a3a;letter-spacing:-0.032px;">Downloads</div>
<svg class="abs" style="left:1796.2px;top:1068.8px;" width="22.4" height="22.4" viewBox="0 0 28 28" preserveAspectRatio="none"><circle cx="14" cy="14" r="12.3" fill="none" stroke="#1677f2" stroke-width="2.1"/><path d="M14 7.5V19.5M9 15L14 20L19 15" fill="none" stroke="#1677f2" stroke-width="2.2" stroke-linecap="round" stroke-linejoin="round"/></svg>
<div class="t" style="left:1832.7px;top:1113.5px;font:400 23.00px/30px 'Liberation Sans',sans-serif;color:#3a3a3a;letter-spacing:0.043px;">Notes</div>
<svg class="abs" style="left:1795.4px;top:1118.4px;" width="24.0" height="19.2" viewBox="0 0 30 24" preserveAspectRatio="none"><path d="M1.2 4Q1.2 1.2 4 1.2H10.5L13.5 4.5H26Q28.8 4.5 28.8 7.3V20Q28.8 22.8 26 22.8H4Q1.2 22.8 1.2 20Z" fill="none" stroke="#1677f2" stroke-width="2.2" stroke-linejoin="round"/><path d="M1.5 9H28.5" stroke="#1677f2" stroke-width="1.8"/></svg>
<div class="t" style="left:1832.7px;top:1161.5px;font:400 23.00px/30px 'Liberation Sans',sans-serif;color:#3a3a3a;letter-spacing:-1.447px;">OSU</div>
<svg class="abs" style="left:1795.4px;top:1166.4px;" width="24.0" height="19.2" viewBox="0 0 30 24" preserveAspectRatio="none"><path d="M1.2 4Q1.2 1.2 4 1.2H10.5L13.5 4.5H26Q28.8 4.5 28.8 7.3V20Q28.8 22.8 26 22.8H4Q1.2 22.8 1.2 20Z" fill="none" stroke="#1677f2" stroke-width="2.2" stroke-linejoin="round"/><path d="M1.5 9H28.5" stroke="#1677f2" stroke-width="1.8"/></svg>
<div class="t" style="left:1832.7px;top:1273.3px;font:400 23.00px/30px 'Liberation Sans',sans-serif;color:#3a3a3a;letter-spacing:0.086px;">iCloud Drive</div>
<svg class="abs" style="left:1793.3px;top:1278.1px;" width="28.2" height="19.4" viewBox="0 0 32 22" preserveAspectRatio="none"><path d="M8 20.5Q1.5 20.5 1.5 14.5Q1.5 9.5 7 9Q8.5 1.5 16 1.5Q22.5 1.5 24.5 8Q30.5 8.5 30.5 14.5Q30.5 20.5 24.5 20.5Z" fill="none" stroke="#1677f2" stroke-width="2.2" stroke-linejoin="round"/></svg>
<div class="t" style="left:1832.7px;top:1321.3px;font:400 23.00px/30px 'Liberation Sans',sans-serif;color:#3a3a3a;letter-spacing:-0.328px;">Shared</div>
<svg class="abs" style="left:1794.2px;top:1324.8px;" width="29.9" height="22.0" viewBox="0 0 34 25" preserveAspectRatio="none"><path d="M20 4.5H13.5L10.5 1.2H4Q1.2 1.2 1.2 4V20Q1.2 22.8 4 22.8H26Q28.8 22.8 28.8 20V15" fill="none" stroke="#1677f2" stroke-width="2.2" stroke-linejoin="round"/><path d="M1.5 9H19" stroke="#1677f2" stroke-width="1.8"/><circle cx="27" cy="7" r="6.5" fill="#1677f2"/><circle cx="27" cy="5" r="2" fill="#f5f5f5"/><path d="M23.5 10.5Q27 6.5 30.5 10.5" fill="#f5f5f5"/></svg>
<div class="t" style="left:1832.7px;top:1433.2px;font:400 23.00px/30px 'Liberation Sans',sans-serif;color:#3a3a3a;letter-spacing:-0.515px;">Brandon’s…</div>
<svg class="abs" style="left:1792.4px;top:1438.3px;" width="30.1" height="18.8" viewBox="0 0 32 20" preserveAspectRatio="none"><rect x="4.5" y="1.2" width="23" height="15" rx="2" fill="#dcdcdc" stroke="#6e6e6e" stroke-width="2"/><path d="M0.5 18.2H31.5" stroke="#6e6e6e" stroke-width="2.4" stroke-linecap="round"/><path d="M13 1.5H19V3.5H13Z" fill="#6e6e6e"/></svg>
<div class="t" style="left:1832.7px;top:1481.2px;font:400 23.00px/30px 'Liberation Sans',sans-serif;color:#3a3a3a;letter-spacing:-0.612px;">Autodes…</div>
<svg class="abs" style="left:1794.2px;top:1486.3px;" width="26.3" height="18.8" viewBox="0 0 28 20" preserveAspectRatio="none"><path d="M6 1.2H22L26.8 11V16Q26.8 18.8 24 18.8H4Q1.2 18.8 1.2 16V11Z" fill="none" stroke="#6e6e6e" stroke-width="2" stroke-linejoin="round"/><path d="M1.5 11H26.5" stroke="#6e6e6e" stroke-width="1.8"/><circle cx="22" cy="15" r="1.5" fill="#6e6e6e"/></svg>
<svg class="abs" style="left:1952.0px;top:1485.7px;" width="20.0" height="19.0" viewBox="0 0 20 19" preserveAspectRatio="none"><path d="M10 0.5L19.5 11H0.5Z" fill="#b9b9b9"/><rect x="0.5" y="14" width="19" height="4.5" rx="1" fill="#b9b9b9"/></svg>
<div class="t" style="left:1832.7px;top:1593.9px;font:400 23.00px/30px 'Liberation Sans',sans-serif;color:#3a3a3a;letter-spacing:-1.231px;">Red</div>
<div class="abs" style="left:1798.5px;top:1599.9px;width:17.5px;height:17.5px;border-radius:50%;background:#fb3b3b"></div>
<div class="t" style="left:1832.7px;top:1641.9px;font:400 23.00px/30px 'Liberation Sans',sans-serif;color:#3a3a3a;letter-spacing:-0.219px;">Orange</div>
<div class="abs" style="left:1798.5px;top:1647.9px;width:17.5px;height:17.5px;border-radius:50%;background:#f28a0a"></div>
<div class="t" style="left:1832.7px;top:1689.9px;font:400 23.00px/30px 'Liberation Sans',sans-serif;color:#3a3a3a;letter-spacing:0.726px;">Yellow</div>
<div class="abs" style="left:1798.5px;top:1695.9px;width:17.5px;height:17.5px;border-radius:50%;background:#f7cd2b"></div>
<div class="abs" style="left:2017.4px;top:1576.0px;width:1342.0px;height:1.6px;background:#e2e2e2"></div>
<div class="abs" style="left:2058.0px;top:1617.9px;width:178.0px;height:39.8px;background:#fff;border-radius:9px;box-shadow:0 0 0 1px rgba(0,0,0,.07),0 1px 2.5px rgba(0,0,0,.22);"></div>
<div class="t" style="left:2078.5px;top:1620.5px;font:400 26.00px/34px 'Liberation Sans',sans-serif;color:#1c1c1c;letter-spacing:0.277px;">New Folder</div>
<div class="abs" style="left:3016.2px;top:1617.8px;width:143.9px;height:40.2px;background:#fff;border-radius:9px;box-shadow:0 0 0 1px rgba(0,0,0,.07),0 1px 2.5px rgba(0,0,0,.22);"></div>
<div class="t" style="left:3047.0px;top:1620.5px;font:400 26.00px/34px 'Liberation Sans',sans-serif;color:#1c1c1c;letter-spacing:0.144px;">Cancel</div>
<div class="abs" style="left:3175.8px;top:1617.8px;width:143.9px;height:40.2px;border-radius:9px;background:linear-gradient(#4a8ff9,#2f7af5);box-shadow:0 1px 2.5px rgba(0,0,0,.25)"></div>
<div class="t" style="left:3215.4px;top:1620.5px;font:400 26.00px/34px 'Liberation Sans',sans-serif;color:#fff;letter-spacing:0.249px;">Open</div>
</div></div>
<svg class="abs" style="left:0;top:0" width="4112" height="2572" viewBox="0 0 4112 2572"><path d="M0 0H4112V2572H0Z M0 21Q0 2 19 2H4093Q4112 2 4112 21V2551Q4112 2572 4091 2572H21Q0 2572 0 2551Z" fill="#000" fill-rule="evenodd"/></svg>
</div></body></html>
